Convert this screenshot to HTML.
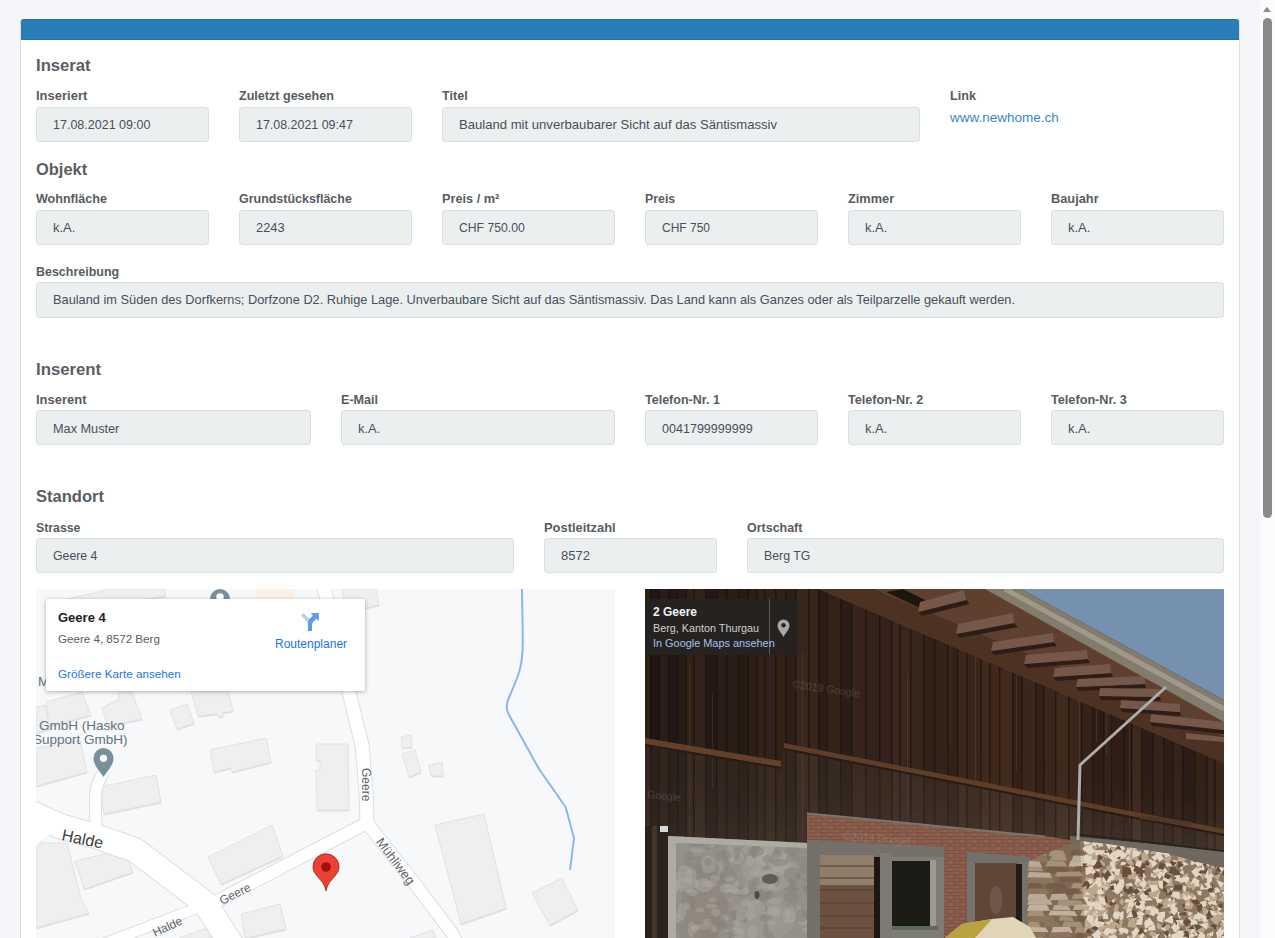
<!DOCTYPE html>
<html><head><meta charset="utf-8">
<style>
html,body{margin:0;padding:0;}
body{width:1275px;height:938px;overflow:hidden;background:#f4f6f9;position:relative;font-family:"Liberation Sans",sans-serif;}
.abs{position:absolute;}
#sb{position:absolute;left:1260px;top:0;width:15px;height:938px;background:#fbfbfb;}
#sbup{position:absolute;left:1263px;top:7px;width:0;height:0;border-left:4.5px solid transparent;border-right:4.5px solid transparent;border-bottom:5px solid #8a8a8a;}
#thumb{position:absolute;left:1263px;top:18px;width:9px;height:500px;background:#8a8a8a;border-radius:4.5px;}
#card{position:absolute;left:20px;top:18px;width:1220px;height:930px;box-sizing:border-box;background:#fff;border-left:1px solid #dedede;border-right:1px solid #dedede;border-radius:4px 4px 0 0;box-shadow:0 1px 2px rgba(0,0,0,.06);}
#cardhead{position:absolute;left:21px;top:19px;width:1218px;height:21px;background:#2a7db6;border-top:1px solid #1f72aa;border-bottom:1px solid #2373ad;box-sizing:border-box;border-radius:3px 3px 0 0;}
.h{position:absolute;font-weight:bold;color:#5a5e62;white-space:nowrap;line-height:20px;}
.lb{position:absolute;font-weight:bold;color:#585c61;white-space:nowrap;line-height:20px;}
.in{position:absolute;box-sizing:border-box;background:#ebeff0;border:1px solid #d6dfe1;border-radius:3.5px;}
.tx{position:absolute;color:#495057;white-space:nowrap;line-height:20px;}
.lnk{position:absolute;color:#3c85c0;white-space:nowrap;line-height:20px;}
svg text{font-family:"Liberation Sans",sans-serif;}
</style></head>
<body>
<div id="card"></div>
<div id="cardhead"></div>
<div class="h" style="left:36px;top:56px;font-size:16.66px">Inserat</div>
<div class="lb" style="left:36px;top:86px;font-size:13.0px">Inseriert</div>
<div class="lb" style="left:239px;top:86px;font-size:12.57px">Zuletzt gesehen</div>
<div class="lb" style="left:442px;top:86px;font-size:12.6px">Titel</div>
<div class="lb" style="left:950px;top:86px;font-size:12.6px">Link</div>
<div class="in" style="left:36px;top:107px;width:173px;height:35px"></div>
<div class="in" style="left:239px;top:107px;width:173px;height:35px"></div>
<div class="in" style="left:442px;top:107px;width:478px;height:35px"></div>
<div class="tx" style="left:53px;top:115px;font-size:12.52px">17.08.2021 09:00</div>
<div class="tx" style="left:256px;top:115px;font-size:12.44px">17.08.2021 09:47</div>
<div class="tx" style="left:459px;top:115px;font-size:13.1px">Bauland mit unverbaubarer Sicht auf das Säntismassiv</div>
<div class="lnk" style="left:950px;top:108px;font-size:13.5px">www.newhome.ch</div>
<div class="h" style="left:36px;top:159px;font-size:16.47px">Objekt</div>
<div class="lb" style="left:36px;top:189px;font-size:12.55px">Wohnfläche</div>
<div class="lb" style="left:239px;top:189px;font-size:12.46px">Grundstücksfläche</div>
<div class="lb" style="left:442px;top:189px;font-size:12.72px">Preis / m²</div>
<div class="lb" style="left:645px;top:189px;font-size:12.36px">Preis</div>
<div class="lb" style="left:848px;top:189px;font-size:12.77px">Zimmer</div>
<div class="lb" style="left:1051px;top:189px;font-size:12.8px">Baujahr</div>
<div class="in" style="left:36px;top:210px;width:173px;height:35px"></div>
<div class="in" style="left:239px;top:210px;width:173px;height:35px"></div>
<div class="in" style="left:442px;top:210px;width:173px;height:35px"></div>
<div class="in" style="left:645px;top:210px;width:173px;height:35px"></div>
<div class="in" style="left:848px;top:210px;width:173px;height:35px"></div>
<div class="in" style="left:1051px;top:210px;width:173px;height:35px"></div>
<div class="tx" style="left:53px;top:218px;font-size:13.0px">k.A.</div>
<div class="tx" style="left:256px;top:218px;font-size:12.86px">2243</div>
<div class="tx" style="left:459px;top:218px;font-size:12.19px">CHF 750.00</div>
<div class="tx" style="left:662px;top:218px;font-size:12.0px">CHF 750</div>
<div class="tx" style="left:865px;top:218px;font-size:13.0px">k.A.</div>
<div class="tx" style="left:1068px;top:218px;font-size:13.0px">k.A.</div>
<div class="lb" style="left:36px;top:262px;font-size:12.48px">Beschreibung</div>
<div class="in" style="left:36px;top:282px;width:1188px;height:36px"></div>
<div class="tx" style="left:53px;top:290px;font-size:12.81px">Bauland im Süden des Dorfkerns; Dorfzone D2. Ruhige Lage. Unverbaubare Sicht auf das Säntismassiv. Das Land kann als Ganzes oder als Teilparzelle gekauft werden.</div>
<div class="h" style="left:36px;top:360px;font-size:16.75px">Inserent</div>
<div class="lb" style="left:36px;top:390px;font-size:12.97px">Inserent</div>
<div class="lb" style="left:341px;top:390px;font-size:12.6px">E-Mail</div>
<div class="lb" style="left:645px;top:390px;font-size:12.52px">Telefon-Nr. 1</div>
<div class="lb" style="left:848px;top:390px;font-size:12.6px">Telefon-Nr. 2</div>
<div class="lb" style="left:1051px;top:390px;font-size:12.68px">Telefon-Nr. 3</div>
<div class="in" style="left:36px;top:410px;width:275px;height:35px"></div>
<div class="in" style="left:341px;top:410px;width:274px;height:35px"></div>
<div class="in" style="left:645px;top:410px;width:173px;height:35px"></div>
<div class="in" style="left:848px;top:410px;width:173px;height:35px"></div>
<div class="in" style="left:1051px;top:410px;width:173px;height:35px"></div>
<div class="tx" style="left:53px;top:419px;font-size:12.71px">Max Muster</div>
<div class="tx" style="left:358px;top:419px;font-size:13.0px">k.A.</div>
<div class="tx" style="left:662px;top:419px;font-size:12.55px">0041799999999</div>
<div class="tx" style="left:865px;top:419px;font-size:13.0px">k.A.</div>
<div class="tx" style="left:1068px;top:419px;font-size:13.0px">k.A.</div>
<div class="h" style="left:36px;top:487px;font-size:16.54px">Standort</div>
<div class="lb" style="left:36px;top:518px;font-size:12.3px">Strasse</div>
<div class="lb" style="left:544px;top:518px;font-size:12.9px">Postleitzahl</div>
<div class="lb" style="left:747px;top:518px;font-size:12.48px">Ortschaft</div>
<div class="in" style="left:36px;top:538px;width:478px;height:35px"></div>
<div class="in" style="left:544px;top:538px;width:173px;height:35px"></div>
<div class="in" style="left:747px;top:538px;width:477px;height:35px"></div>
<div class="tx" style="left:53px;top:546px;font-size:12.29px">Geere 4</div>
<div class="tx" style="left:561px;top:546px;font-size:13.0px">8572</div>
<div class="tx" style="left:764px;top:546px;font-size:12.3px">Berg TG</div>
<div id="map" class="abs" style="left:36px;top:589px;width:579px;height:349px;background:#f5f6f8;overflow:hidden">
<svg width="579" height="349" viewBox="36 589 579 349" style="position:absolute;left:0;top:0">
<rect x="36" y="589" width="579" height="349" fill="#f7f8fa"/>
<!-- buildings -->
<g fill="#dedfe2" stroke="none" transform="translate(0.5,1.5)">
<polygon points="64,600 110,589 165,589 165,596 115,604"/>
<polygon points="342,589 376,589 379,605 346,612"/>
<polygon points="46,702 82,692 91,715 49,726"/><polygon points="36,707 45,705 50,729 36,733"/><polygon points="102,708 119,699 118,692 132,692 142,719 108,726"/>
<polygon points="36,748 80,740 87,772 36,786"/>
<polygon points="100,787 156,775 161,802 104,814"/>
<polygon points="36,843 67,843 81,899 89,913 53,923 36,928"/>
<polygon points="75,861 125,849 133,872 84,889"/>
<polygon points="210,750 266,738 271,762 232,772 231,768 214,772"/>
<polygon points="208,857 272,825 283,856 221,884"/>
<polygon points="316,744 348,744 349,810 317,810 316,770 320,770 320,760 316,760"/>
<polygon points="241,914 280,904 286,929 245,938"/>
<polygon points="170,710 187,704 194,723 177,729"/>
<polygon points="191,691 228,691 233,711 222,713 223,716 218,717 217,714 198,716"/>
<polygon points="435,825 484,814 506,908 461,924"/>
<polygon points="532,893 562,878 578,910 550,925"/>
<polygon points="409,938 433,930 436,938"/>
<polygon points="402,754 415,750 421,772 409,777"/>
<polygon points="429,765 442,762 443,776 431,776"/>
<polygon points="401,737 411,735 412,747 402,748"/>
<polygon points="179,938 207,928 215,938"/>
</g>
<g fill="#efeff0" stroke="#e2e3e6" stroke-width="1">
<polygon points="64,600 110,589 165,589 165,596 115,604"/>
<polygon points="342,589 376,589 379,605 346,612"/>
<polygon points="46,702 82,692 91,715 49,726"/><polygon points="36,707 45,705 50,729 36,733"/><polygon points="102,708 119,699 118,692 132,692 142,719 108,726"/>
<polygon points="36,748 80,740 87,772 36,786"/>
<polygon points="100,787 156,775 161,802 104,814"/>
<polygon points="36,843 67,843 81,899 89,913 53,923 36,928"/>
<polygon points="75,861 125,849 133,872 84,889"/>
<polygon points="210,750 266,738 271,762 232,772 231,768 214,772"/>
<polygon points="208,857 272,825 283,856 221,884"/>
<polygon points="316,744 348,744 349,810 317,810 316,770 320,770 320,760 316,760"/>
<polygon points="241,914 280,904 286,929 245,938"/>
<polygon points="170,710 187,704 194,723 177,729"/>
<polygon points="191,691 228,691 233,711 222,713 223,716 218,717 217,714 198,716"/>
<polygon points="435,825 484,814 506,908 461,924"/>
<polygon points="532,893 562,878 578,910 550,925"/>
<polygon points="409,938 433,930 436,938"/>
<polygon points="402,754 415,750 421,772 409,777"/>
<polygon points="429,765 442,762 443,776 431,776"/>
<polygon points="401,737 411,735 412,747 402,748"/>
<polygon points="179,938 207,928 215,938"/>
</g>
<polygon points="256,589 295,589 295,599 256,599" fill="#fcf1e6"/>
<!-- stream -->
<path d="M522,589 L522.8,640 C523,655 521,668 517.5,677 L508,700 C506,706 506,710 509,715 L539,769 L565.6,807 L574,838 L570,870" fill="none" stroke="#8ab4f8" stroke-width="2" stroke-linejoin="round"/>
<!-- road borders -->
<g fill="none" stroke="#dcdee2" stroke-linejoin="round" stroke-linecap="butt">
<polyline points="320,570 349,692 362,745 366,790 367,823" stroke-width="15"/>
<polyline points="367,823 215,902" stroke-width="14"/>
<polyline points="367,823 412,880 452,933 460,950" stroke-width="14"/>
<polyline points="20,808 60,826 95,836 135,850 205,903 235,950" stroke-width="26"/>
<polyline points="100,945 200,907" stroke-width="12"/>
<path d="M96,830 C96,800 92,790 104,772" stroke-width="13"/>
</g>
<g fill="none" stroke="#ffffff" stroke-linejoin="round" stroke-linecap="butt">
<polyline points="320,570 349,692 362,745 366,790 367,823" stroke-width="13"/>
<polyline points="367,823 215,902" stroke-width="12"/>
<polyline points="367,823 412,880 452,933 460,950" stroke-width="12"/>
<polyline points="20,808 60,826 95,836 135,850 205,903 235,950" stroke-width="24"/>
<polyline points="100,945 200,907" stroke-width="10"/>
<path d="M96,830 C96,800 92,790 104,772" stroke-width="11"/>
</g>
<polygon points="30,815 52,832 44,839 30,852" fill="#fff"/>
<polyline points="30,853 44,839" stroke="#dcdee2" stroke-width="1" fill="none"/>
<!-- labels -->
<g fill="#5f7380" font-size="13.5">
<text x="39" y="730">GmbH (Hasko</text>
<text x="33" y="744">Support GmbH)</text>
<text x="38" y="686">M</text>
</g>
<g fill="#3c4043">
<text x="0" y="0" font-size="16" transform="translate(61,840) rotate(12)">Halde</text>
</g>
<g fill="#5f6368" font-size="12">
<text x="0" y="0" transform="translate(222,905) rotate(-27)">Geere</text>
<text x="0" y="0" transform="translate(155,937) rotate(-25)">Halde</text>
<text x="0" y="0" transform="translate(362,768) rotate(90)">Geere</text>
<text x="0" y="0" font-size="13" transform="translate(375.5,842) rotate(53)">Mühliweg</text>
</g>
<!-- grey pins -->
<g fill="#78909c">
<path d="M103.5,777 C100,771 93.5,766 93.5,758 A10,10 0 1 1 113.5,758 C113.5,766 107,771 103.5,777 Z"/>
<circle cx="220" cy="599" r="10"/>
</g>
<circle cx="103.5" cy="758.3" r="3.6" fill="#fff"/>
<circle cx="220" cy="597" r="3.8" fill="#fff"/>
<!-- red pin -->
<path d="M326,891 C325.2,886.5 323.5,883.5 320.5,880 C316.5,875.5 313,872 313,866.8 A13,13 0 1 1 339,866.8 C339,872 335.5,875.5 331.5,880 C328.5,883.5 326.8,886.5 326,891 Z" fill="#ea4335" stroke="#b31412" stroke-width="0.8"/>
<circle cx="326" cy="867" r="4.8" fill="#a50e0e"/>
<!-- info card -->
<rect x="46" y="599" width="319" height="92" rx="2" fill="#fff" style="filter:drop-shadow(0 1px 2px rgba(0,0,0,0.3))"/>
<text x="58" y="622" font-size="13" font-weight="bold" fill="#202124">Geere 4</text>
<text x="58" y="643" font-size="11.6" fill="#5b5b5b">Geere 4, 8572 Berg</text>
<text x="58" y="678" font-size="11.7" fill="#1a73e8">Größere Karte ansehen</text>
<text x="275" y="648" font-size="12" fill="#1a73e8">Routenplaner</text>
<g>
<path d="M301,615.6 L303.4,613 L309.8,619.2 L307.9,622.4 Z" fill="#b3d1f5"/>
<path d="M307.9,631 L307.9,623.5 C307.9,621.5 308.6,620 310,618.6 L312.8,615.6 L310.7,613 L318.9,613 L318.9,621 L316.3,618.8 L314,621.2 C312.8,622.4 312,623.4 312,625 L312,631 Z" fill="#5f9ee6"/>
</g>
</svg>

</div>
<div id="sv" class="abs" style="left:645px;top:589px;width:579px;height:349px;background:#3b2c22;overflow:hidden">
<svg width="579" height="349" viewBox="645 589 579 349" style="position:absolute;left:0;top:0">
<defs>
<pattern id="planks" x="645" y="0" width="19" height="400" patternUnits="userSpaceOnUse">
<rect width="19" height="400" fill="#38261d"/>
<rect x="0" width="2" height="400" fill="#2a1c16"/>
<rect x="4" width="5" height="400" fill="#412b21"/>
<rect x="11" width="1.5" height="400" fill="#2e1f18"/>
<rect x="14" width="3" height="400" fill="#3d2a21"/>
</pattern>
<linearGradient id="wallv" x1="0" y1="0" x2="0" y2="1">
<stop offset="0" stop-color="#000" stop-opacity="0"/>
<stop offset="0.45" stop-color="#000" stop-opacity="0"/>
<stop offset="0.75" stop-color="#8a7a70" stop-opacity="0.12"/>
<stop offset="1" stop-color="#8a7a70" stop-opacity="0.15"/>
</linearGradient>
<linearGradient id="wallshade" x1="0" y1="0" x2="1" y2="0">
<stop offset="0" stop-color="#000" stop-opacity="0.28"/>
<stop offset="0.35" stop-color="#000" stop-opacity="0.05"/>
<stop offset="0.6" stop-color="#5a2a10" stop-opacity="0.08"/>
<stop offset="1" stop-color="#000" stop-opacity="0.1"/>
</linearGradient>
<pattern id="planks2" x="645" y="0" width="13" height="400" patternUnits="userSpaceOnUse">
<rect width="13" height="400" fill="#3d2e25"/>
<rect x="0" width="1.5" height="400" fill="#241a14"/>
<rect x="4" width="5" height="400" fill="#4a3a30"/>
</pattern>
<pattern id="wood" x="0" y="0" width="22" height="13" patternUnits="userSpaceOnUse" patternTransform="rotate(-8)">
<rect width="22" height="13" fill="#9c8670"/>
<rect x="1" y="1" width="10" height="5" fill="#d0bea8"/>
<rect x="12" y="4" width="9" height="6" fill="#c6b29a"/>
<rect x="2" y="7.5" width="8" height="4.5" fill="#b8a48c"/>
<rect x="0" y="6" width="12" height="1.2" fill="#5a4638"/>
<rect x="11" y="0" width="1.2" height="13" fill="#6a5444"/>
</pattern>
<pattern id="brick" x="0" y="0" width="12" height="7" patternUnits="userSpaceOnUse">
<rect width="12" height="7" fill="#8a5a4a"/>
<rect x="1" y="0.5" width="4" height="2.5" fill="#94604e"/>
<rect x="7" y="4" width="4" height="2.3" fill="#925e4c"/>
<rect y="3" width="12" height="0.8" fill="#6f5248"/>
<rect y="6.3" width="12" height="0.7" fill="#6f5248"/>
<rect x="5.5" y="0" width="0.8" height="3.2" fill="#6f5248"/>
</pattern>
<filter id="soft" x="0" y="0" width="100%" height="100%"><feGaussianBlur stdDeviation="0.7"/></filter>
<clipPath id="wpclip"><polygon points="1027,938 1027,880 1029,861 1049,852 1080,841 1108,844 1170,854 1192,861 1224,868 1224,938"/></clipPath>
<clipPath id="ccclip"><polygon points="676,843 807,848 807,938 676,938"/></clipPath>
</defs>
<g filter="url(#soft)">
<rect x="640" y="585" width="10" height="360" fill="#402c21"/>
<rect x="640" y="585" width="1.5" height="360" fill="#22170f"/>
<rect x="650" y="585" width="8" height="360" fill="#2f2018"/>
<rect x="650" y="585" width="1.5" height="360" fill="#22170f"/>
<rect x="658" y="585" width="10" height="360" fill="#39271d"/>
<rect x="658" y="585" width="1.5" height="360" fill="#22170f"/>
<rect x="668" y="585" width="9" height="360" fill="#2e1f18"/>
<rect x="668" y="585" width="1.5" height="360" fill="#22170f"/>
<rect x="677" y="585" width="8" height="360" fill="#32221a"/>
<rect x="677" y="585" width="1.5" height="360" fill="#22170f"/>
<rect x="685" y="585" width="8" height="360" fill="#3e2a20"/>
<rect x="685" y="585" width="1.5" height="360" fill="#22170f"/>
<rect x="689" y="665" width="1" height="220" fill="#6a5848" opacity="0.35"/>
<rect x="693" y="585" width="12" height="360" fill="#402c21"/>
<rect x="693" y="585" width="1.5" height="360" fill="#22170f"/>
<rect x="705" y="585" width="11" height="360" fill="#2e1f18"/>
<rect x="705" y="585" width="1.5" height="360" fill="#22170f"/>
<rect x="712" y="694" width="1" height="94" fill="#6a5848" opacity="0.35"/>
<rect x="716" y="585" width="10" height="360" fill="#36241c"/>
<rect x="716" y="585" width="1.5" height="360" fill="#22170f"/>
<rect x="726" y="585" width="12" height="360" fill="#34231b"/>
<rect x="726" y="585" width="1.5" height="360" fill="#22170f"/>
<rect x="738" y="585" width="9" height="360" fill="#302019"/>
<rect x="738" y="585" width="1.5" height="360" fill="#22170f"/>
<rect x="747" y="585" width="9" height="360" fill="#35241b"/>
<rect x="747" y="585" width="1.5" height="360" fill="#22170f"/>
<rect x="756" y="585" width="8" height="360" fill="#39261d"/>
<rect x="756" y="585" width="1.5" height="360" fill="#22170f"/>
<rect x="764" y="585" width="11" height="360" fill="#3b281e"/>
<rect x="764" y="585" width="1.5" height="360" fill="#22170f"/>
<rect x="775" y="585" width="10" height="360" fill="#37251c"/>
<rect x="775" y="585" width="1.5" height="360" fill="#22170f"/>
<rect x="785" y="585" width="10" height="360" fill="#33231a"/>
<rect x="785" y="585" width="1.5" height="360" fill="#22170f"/>
<rect x="795" y="585" width="13" height="360" fill="#3d291f"/>
<rect x="795" y="585" width="1.5" height="360" fill="#22170f"/>
<rect x="802" y="652" width="1" height="186" fill="#6a5848" opacity="0.35"/>
<rect x="808" y="585" width="10" height="360" fill="#3c291f"/>
<rect x="808" y="585" width="1.5" height="360" fill="#22170f"/>
<rect x="818" y="585" width="8" height="360" fill="#302019"/>
<rect x="818" y="585" width="1.5" height="360" fill="#22170f"/>
<rect x="826" y="585" width="14" height="360" fill="#34231b"/>
<rect x="826" y="585" width="1.5" height="360" fill="#22170f"/>
<rect x="840" y="585" width="11" height="360" fill="#2e1f18"/>
<rect x="840" y="585" width="1.5" height="360" fill="#22170f"/>
<rect x="851" y="585" width="14" height="360" fill="#39261d"/>
<rect x="851" y="585" width="1.5" height="360" fill="#22170f"/>
<rect x="865" y="585" width="14" height="360" fill="#34231b"/>
<rect x="865" y="585" width="1.5" height="360" fill="#22170f"/>
<rect x="879" y="585" width="12" height="360" fill="#37251c"/>
<rect x="879" y="585" width="1.5" height="360" fill="#22170f"/>
<rect x="891" y="585" width="8" height="360" fill="#3e2a20"/>
<rect x="891" y="585" width="1.5" height="360" fill="#22170f"/>
<rect x="899" y="585" width="11" height="360" fill="#3b281e"/>
<rect x="899" y="585" width="1.5" height="360" fill="#22170f"/>
<rect x="907" y="674" width="1" height="139" fill="#6a5848" opacity="0.35"/>
<rect x="910" y="585" width="13" height="360" fill="#39271d"/>
<rect x="910" y="585" width="1.5" height="360" fill="#22170f"/>
<rect x="923" y="585" width="11" height="360" fill="#33221a"/>
<rect x="923" y="585" width="1.5" height="360" fill="#22170f"/>
<rect x="934" y="585" width="13" height="360" fill="#34231b"/>
<rect x="934" y="585" width="1.5" height="360" fill="#22170f"/>
<rect x="947" y="585" width="10" height="360" fill="#312119"/>
<rect x="947" y="585" width="1.5" height="360" fill="#22170f"/>
<rect x="950" y="612" width="1" height="133" fill="#6a5848" opacity="0.35"/>
<rect x="957" y="585" width="9" height="360" fill="#3c291f"/>
<rect x="957" y="585" width="1.5" height="360" fill="#22170f"/>
<rect x="966" y="585" width="14" height="360" fill="#37251c"/>
<rect x="966" y="585" width="1.5" height="360" fill="#22170f"/>
<rect x="975" y="655" width="1" height="131" fill="#6a5848" opacity="0.35"/>
<rect x="980" y="585" width="9" height="360" fill="#3e2a20"/>
<rect x="980" y="585" width="1.5" height="360" fill="#22170f"/>
<rect x="989" y="585" width="10" height="360" fill="#3c281f"/>
<rect x="989" y="585" width="1.5" height="360" fill="#22170f"/>
<rect x="999" y="585" width="13" height="360" fill="#3f2b20"/>
<rect x="999" y="585" width="1.5" height="360" fill="#22170f"/>
<rect x="1012" y="585" width="9" height="360" fill="#2f2018"/>
<rect x="1012" y="585" width="1.5" height="360" fill="#22170f"/>
<rect x="1016" y="586" width="1" height="184" fill="#6a5848" opacity="0.35"/>
<rect x="1021" y="585" width="14" height="360" fill="#39271d"/>
<rect x="1021" y="585" width="1.5" height="360" fill="#22170f"/>
<rect x="1035" y="585" width="8" height="360" fill="#302119"/>
<rect x="1035" y="585" width="1.5" height="360" fill="#22170f"/>
<rect x="1043" y="585" width="12" height="360" fill="#39261d"/>
<rect x="1043" y="585" width="1.5" height="360" fill="#22170f"/>
<rect x="1055" y="585" width="13" height="360" fill="#3f2b20"/>
<rect x="1055" y="585" width="1.5" height="360" fill="#22170f"/>
<rect x="1068" y="585" width="13" height="360" fill="#3b281e"/>
<rect x="1068" y="585" width="1.5" height="360" fill="#22170f"/>
<rect x="1079" y="635" width="1" height="161" fill="#6a5848" opacity="0.35"/>
<rect x="1081" y="585" width="11" height="360" fill="#35241b"/>
<rect x="1081" y="585" width="1.5" height="360" fill="#22170f"/>
<rect x="1092" y="585" width="11" height="360" fill="#2f1f18"/>
<rect x="1092" y="585" width="1.5" height="360" fill="#22170f"/>
<rect x="1096" y="641" width="1" height="101" fill="#6a5848" opacity="0.35"/>
<rect x="1103" y="585" width="8" height="360" fill="#34231b"/>
<rect x="1103" y="585" width="1.5" height="360" fill="#22170f"/>
<rect x="1106" y="657" width="1" height="98" fill="#6a5848" opacity="0.35"/>
<rect x="1111" y="585" width="12" height="360" fill="#302019"/>
<rect x="1111" y="585" width="1.5" height="360" fill="#22170f"/>
<rect x="1123" y="585" width="8" height="360" fill="#2f1f18"/>
<rect x="1123" y="585" width="1.5" height="360" fill="#22170f"/>
<rect x="1129" y="604" width="1" height="222" fill="#6a5848" opacity="0.35"/>
<rect x="1131" y="585" width="10" height="360" fill="#412c21"/>
<rect x="1131" y="585" width="1.5" height="360" fill="#22170f"/>
<rect x="1141" y="585" width="11" height="360" fill="#302019"/>
<rect x="1141" y="585" width="1.5" height="360" fill="#22170f"/>
<rect x="1152" y="585" width="11" height="360" fill="#37251c"/>
<rect x="1152" y="585" width="1.5" height="360" fill="#22170f"/>
<rect x="1163" y="585" width="9" height="360" fill="#302019"/>
<rect x="1163" y="585" width="1.5" height="360" fill="#22170f"/>
<rect x="1172" y="585" width="10" height="360" fill="#37251c"/>
<rect x="1172" y="585" width="1.5" height="360" fill="#22170f"/>
<rect x="1182" y="585" width="12" height="360" fill="#2e1f18"/>
<rect x="1182" y="585" width="1.5" height="360" fill="#22170f"/>
<rect x="1194" y="585" width="12" height="360" fill="#35241b"/>
<rect x="1194" y="585" width="1.5" height="360" fill="#22170f"/>
<rect x="1206" y="585" width="8" height="360" fill="#3d291f"/>
<rect x="1206" y="585" width="1.5" height="360" fill="#22170f"/>
<rect x="1214" y="585" width="13" height="360" fill="#3f2b20"/>
<rect x="1214" y="585" width="1.5" height="360" fill="#22170f"/>
<rect x="1227" y="585" width="10" height="360" fill="#38261d"/>
<rect x="1227" y="585" width="1.5" height="360" fill="#22170f"/>
<rect x="640" y="585" width="590" height="360" fill="url(#wallshade)"/>
<rect x="640" y="585" width="590" height="360" fill="url(#wallv)"/>
<!-- eaves region -->
<polygon points="818,589 873,589 1224,736.4 1224,763.6" fill="#4d3123"/>
<polygon points="873,589 990,589 1224,718 1224,736.4" fill="#5e402f"/>
<polygon points="886,592 903,589 925,600 920,608" fill="#1e1510"/>
<g fill="#2e1f17">
<polygon points="918,612 966,600 970,604 922,616"/>
<polygon points="956,634 1014,623 1018,627 960,638"/>
<polygon points="991,651 1054,642 1057,646 994,655"/>
<polygon points="1024,664 1088,659 1090,663 1027,668"/>
<polygon points="1053,677 1111,673 1113,677 1056,681"/>
<polygon points="1076,687 1145,684 1146,688 1078,691"/>
<polygon points="1099,696 1160,697 1161,701 1101,700"/>
<polygon points="1120,708 1180,712 1181,716 1122,712"/>
<polygon points="1150,722 1224,730 1224,734 1152,726"/>
</g>
<g fill="#74594a">
<polygon points="920,602 964,590 966,600 918,612"/>
<polygon points="958,624 1013,613 1014,623 956,634"/>
<polygon points="993,642 1053,633 1054,642 991,651"/>
<polygon points="1026,655 1087,650 1088,659 1024,664"/>
<polygon points="1055,668 1110,664 1111,673 1053,677"/>
<polygon points="1078,679 1145,676 1145,684 1076,687"/>
<polygon points="1100,688 1159,689 1160,697 1099,696"/>
<polygon points="1121,700 1180,704 1180,712 1120,708"/>
<polygon points="1151,714 1224,722 1224,730 1150,722"/>
<polygon points="1186,733 1224,737 1224,742 1186,739"/>
</g>
<!-- gutter -->
<polygon points="985,589 1021,589 1224,700 1224,722" fill="#837c6c"/>
<polyline points="1005,589 1224,709" stroke="#a09888" stroke-width="5" fill="none"/>
<!-- sky -->
<polygon points="1021,589 1224,589 1224,700" fill="#7690af"/>
<!-- beams -->
<polygon points="645,738 781,761 781,767 645,744" fill="#643f2b"/><polygon points="645,744 781,767 781,769 645,746" fill="#2a1c14"/>
<polygon points="784,743 1120,809 1224,829 1224,834 1120,814 784,748" fill="#5e3c28"/><polygon points="784,748 1120,814 1224,834 1224,836 1120,816 784,750" fill="#2a1c14"/><polygon points="645,746 781,769 784,750 1120,816 1224,836 1224,870 645,840" fill="#7a7a6a" opacity="0.1"/>
<polygon points="1140,815 1192,822 1192,826 1140,819" fill="#50372a"/>
<!-- rail & lower right base -->
<polygon points="1070,836 1224,850 1224,870 1070,862" fill="#6e675e"/>
<polyline points="1075,834 1224,851" stroke="#2a2420" stroke-width="2" fill="none"/>
<!-- left lower dark strip -->
<rect x="640" y="826" width="29" height="115" fill="#2c201a"/>
<rect x="652" y="826" width="5" height="115" fill="#43352d"/>
<rect x="660" y="826" width="8" height="6" fill="#d8d8d6"/>
<!-- concrete -->
<polygon points="668,836 807,843 807,938 668,938" fill="#94918b"/>
<polygon points="668,836 807,843 807,848 676,843 676,938 668,938" fill="#aeaba4"/>
<ellipse cx="705" cy="900" rx="24" ry="42" fill="#877e72" opacity="0.45"/>
<ellipse cx="770" cy="870" rx="28" ry="22" fill="#a8a6a1" opacity="0.4"/>
<ellipse cx="760" cy="920" rx="35" ry="20" fill="#a2a09b" opacity="0.4"/>
<g clip-path="url(#ccclip)">
<ellipse cx="799.2" cy="911.6" rx="3.1" ry="6.2" fill="#aaa7a1" opacity="0.5"/>
<ellipse cx="774.2" cy="855.8" rx="8.2" ry="7.1" fill="#85827c" opacity="0.5"/>
<ellipse cx="765.7" cy="930.1" rx="2.6" ry="7.2" fill="#85827c" opacity="0.5"/>
<ellipse cx="764.6" cy="867.2" rx="4.3" ry="3.8" fill="#8c8274" opacity="0.5"/>
<ellipse cx="688.6" cy="859.1" rx="5.0" ry="8.0" fill="#8c8274" opacity="0.5"/>
<ellipse cx="695.0" cy="841.4" rx="7.6" ry="7.9" fill="#85827c" opacity="0.5"/>
<ellipse cx="761.1" cy="910.5" rx="6.8" ry="8.1" fill="#85827c" opacity="0.5"/>
<ellipse cx="803.6" cy="921.3" rx="5.9" ry="4.5" fill="#aaa7a1" opacity="0.5"/>
<ellipse cx="691.1" cy="876.2" rx="5.4" ry="8.3" fill="#aaa7a1" opacity="0.5"/>
<ellipse cx="750.3" cy="860.9" rx="4.5" ry="5.4" fill="#aaa7a1" opacity="0.5"/>
<ellipse cx="779.8" cy="941.5" rx="5.8" ry="4.2" fill="#aaa7a1" opacity="0.5"/>
<ellipse cx="754.7" cy="851.4" rx="2.1" ry="6.7" fill="#85827c" opacity="0.5"/>
<ellipse cx="806.7" cy="886.7" rx="2.7" ry="7.8" fill="#85827c" opacity="0.5"/>
<ellipse cx="805.0" cy="875.4" rx="4.1" ry="3.0" fill="#aaa7a1" opacity="0.5"/>
<ellipse cx="681.4" cy="925.9" rx="3.6" ry="3.5" fill="#8c8274" opacity="0.5"/>
<ellipse cx="691.4" cy="900.4" rx="3.5" ry="8.3" fill="#85827c" opacity="0.5"/>
<ellipse cx="736.4" cy="858.1" rx="6.1" ry="3.3" fill="#85827c" opacity="0.5"/>
<ellipse cx="732.1" cy="914.8" rx="7.3" ry="3.8" fill="#85827c" opacity="0.5"/>
<ellipse cx="696.0" cy="858.6" rx="8.4" ry="2.3" fill="#8c8274" opacity="0.5"/>
<ellipse cx="736.6" cy="843.8" rx="2.8" ry="6.9" fill="#aaa7a1" opacity="0.5"/>
<ellipse cx="707.7" cy="864.6" rx="7.7" ry="8.7" fill="#aaa7a1" opacity="0.5"/>
<ellipse cx="785.4" cy="861.2" rx="7.2" ry="7.6" fill="#aaa7a1" opacity="0.5"/>
<ellipse cx="680.5" cy="944.4" rx="6.6" ry="4.4" fill="#85827c" opacity="0.5"/>
<ellipse cx="750.2" cy="916.3" rx="3.7" ry="4.1" fill="#aaa7a1" opacity="0.5"/>
<ellipse cx="765.4" cy="916.4" rx="6.6" ry="5.6" fill="#85827c" opacity="0.5"/>
<ellipse cx="787.2" cy="917.2" rx="5.3" ry="2.5" fill="#85827c" opacity="0.5"/>
<ellipse cx="729.7" cy="895.1" rx="4.8" ry="5.4" fill="#aaa7a1" opacity="0.5"/>
<ellipse cx="766.7" cy="876.0" rx="3.2" ry="6.7" fill="#aaa7a1" opacity="0.5"/>
<ellipse cx="732.9" cy="930.1" rx="8.6" ry="2.2" fill="#aaa7a1" opacity="0.5"/>
<ellipse cx="714.0" cy="944.8" rx="8.1" ry="5.5" fill="#85827c" opacity="0.5"/>
<ellipse cx="713.5" cy="899.6" rx="5.1" ry="2.3" fill="#aaa7a1" opacity="0.5"/>
<ellipse cx="684.8" cy="933.2" rx="5.6" ry="7.2" fill="#8c8274" opacity="0.5"/>
<ellipse cx="732.5" cy="886.3" rx="7.8" ry="7.3" fill="#aaa7a1" opacity="0.5"/>
<ellipse cx="730.1" cy="938.7" rx="2.1" ry="2.0" fill="#85827c" opacity="0.5"/>
<ellipse cx="797.9" cy="876.2" rx="2.7" ry="2.7" fill="#8c8274" opacity="0.5"/>
<ellipse cx="746.9" cy="847.1" rx="4.6" ry="7.1" fill="#aaa7a1" opacity="0.5"/>
<ellipse cx="707.9" cy="862.0" rx="3.5" ry="4.0" fill="#85827c" opacity="0.5"/>
<ellipse cx="773.9" cy="850.8" rx="7.8" ry="2.9" fill="#85827c" opacity="0.5"/>
<ellipse cx="699.9" cy="910.2" rx="4.3" ry="2.3" fill="#aaa7a1" opacity="0.5"/>
<ellipse cx="766.3" cy="883.0" rx="4.6" ry="3.6" fill="#85827c" opacity="0.5"/>
<ellipse cx="793.5" cy="886.5" rx="3.2" ry="5.5" fill="#85827c" opacity="0.5"/>
<ellipse cx="773.7" cy="910.8" rx="6.6" ry="5.0" fill="#aaa7a1" opacity="0.5"/>
<ellipse cx="811.2" cy="920.8" rx="5.6" ry="3.2" fill="#aaa7a1" opacity="0.5"/>
<ellipse cx="698.6" cy="849.2" rx="7.7" ry="3.6" fill="#aaa7a1" opacity="0.5"/>
<ellipse cx="726.1" cy="854.0" rx="2.6" ry="6.5" fill="#85827c" opacity="0.5"/>
<ellipse cx="676.4" cy="885.6" rx="3.6" ry="7.0" fill="#aaa7a1" opacity="0.5"/>
<ellipse cx="741.7" cy="935.5" rx="2.9" ry="7.4" fill="#aaa7a1" opacity="0.5"/>
<ellipse cx="716.6" cy="841.6" rx="4.8" ry="6.7" fill="#85827c" opacity="0.5"/>
<ellipse cx="712.4" cy="878.7" rx="3.4" ry="4.4" fill="#85827c" opacity="0.5"/>
<ellipse cx="730.2" cy="854.0" rx="5.3" ry="8.8" fill="#aaa7a1" opacity="0.5"/>
<ellipse cx="757.7" cy="871.1" rx="6.7" ry="4.8" fill="#aaa7a1" opacity="0.5"/>
<ellipse cx="688.1" cy="886.7" rx="5.3" ry="6.4" fill="#aaa7a1" opacity="0.5"/>
<ellipse cx="801.7" cy="915.2" rx="5.4" ry="7.3" fill="#85827c" opacity="0.5"/>
<ellipse cx="769.8" cy="846.2" rx="5.6" ry="7.2" fill="#aaa7a1" opacity="0.5"/>
<ellipse cx="703.8" cy="885.3" rx="9.0" ry="7.2" fill="#aaa7a1" opacity="0.5"/>
<ellipse cx="703.0" cy="927.4" rx="6.7" ry="4.0" fill="#8c8274" opacity="0.5"/>
<ellipse cx="736.7" cy="857.6" rx="7.3" ry="6.7" fill="#aaa7a1" opacity="0.5"/>
<ellipse cx="735.8" cy="938.4" rx="5.6" ry="2.7" fill="#aaa7a1" opacity="0.5"/>
<ellipse cx="680.7" cy="874.3" rx="7.4" ry="6.2" fill="#8c8274" opacity="0.5"/>
<ellipse cx="681.9" cy="889.1" rx="2.2" ry="3.2" fill="#aaa7a1" opacity="0.5"/>
<ellipse cx="735.7" cy="927.7" rx="5.2" ry="7.7" fill="#aaa7a1" opacity="0.5"/>
<ellipse cx="691.2" cy="929.2" rx="3.3" ry="8.2" fill="#aaa7a1" opacity="0.5"/>
<ellipse cx="711.1" cy="906.2" rx="5.5" ry="2.2" fill="#aaa7a1" opacity="0.5"/>
<ellipse cx="808.1" cy="930.3" rx="5.8" ry="3.2" fill="#aaa7a1" opacity="0.5"/>
<ellipse cx="702.4" cy="926.7" rx="7.6" ry="2.8" fill="#aaa7a1" opacity="0.5"/>
<ellipse cx="786.4" cy="916.8" rx="4.5" ry="7.0" fill="#aaa7a1" opacity="0.5"/>
<ellipse cx="707.7" cy="922.1" rx="5.1" ry="3.3" fill="#aaa7a1" opacity="0.5"/>
<ellipse cx="769.4" cy="913.0" rx="7.3" ry="2.5" fill="#aaa7a1" opacity="0.5"/>
<ellipse cx="687.3" cy="906.3" rx="3.0" ry="3.9" fill="#aaa7a1" opacity="0.5"/>
<ellipse cx="678.5" cy="880.5" rx="8.6" ry="8.5" fill="#aaa7a1" opacity="0.5"/>
<ellipse cx="750.2" cy="887.6" rx="7.3" ry="7.3" fill="#85827c" opacity="0.5"/>
<ellipse cx="685.6" cy="876.2" rx="8.8" ry="2.3" fill="#85827c" opacity="0.5"/>
<ellipse cx="809.0" cy="915.4" rx="4.1" ry="5.8" fill="#85827c" opacity="0.5"/>
<ellipse cx="761.9" cy="858.2" rx="7.6" ry="8.6" fill="#aaa7a1" opacity="0.5"/>
<ellipse cx="731.6" cy="934.1" rx="3.5" ry="4.9" fill="#85827c" opacity="0.5"/>
<ellipse cx="713.8" cy="937.5" rx="5.6" ry="4.5" fill="#8c8274" opacity="0.5"/>
<ellipse cx="715.8" cy="912.3" rx="4.6" ry="4.1" fill="#aaa7a1" opacity="0.5"/>
<ellipse cx="764.8" cy="895.0" rx="8.6" ry="7.7" fill="#85827c" opacity="0.5"/>
<ellipse cx="704.9" cy="934.6" rx="5.8" ry="3.7" fill="#8c8274" opacity="0.5"/>
<ellipse cx="728.5" cy="876.5" rx="8.5" ry="9.0" fill="#85827c" opacity="0.5"/>
<ellipse cx="806.0" cy="943.6" rx="6.2" ry="3.9" fill="#aaa7a1" opacity="0.5"/>
<ellipse cx="741.7" cy="894.3" rx="7.3" ry="2.9" fill="#8c8274" opacity="0.5"/>
<ellipse cx="809.3" cy="851.2" rx="5.7" ry="2.2" fill="#85827c" opacity="0.5"/>
<ellipse cx="689.0" cy="877.5" rx="4.3" ry="7.0" fill="#aaa7a1" opacity="0.5"/>
<ellipse cx="775.0" cy="900.6" rx="8.1" ry="3.3" fill="#aaa7a1" opacity="0.5"/>
<ellipse cx="733.5" cy="914.3" rx="5.2" ry="5.2" fill="#8c8274" opacity="0.5"/>
<ellipse cx="698.3" cy="842.2" rx="5.9" ry="6.0" fill="#85827c" opacity="0.5"/>
<ellipse cx="773.9" cy="887.0" rx="5.0" ry="4.2" fill="#aaa7a1" opacity="0.5"/>
<ellipse cx="729.7" cy="895.6" rx="4.6" ry="3.5" fill="#85827c" opacity="0.5"/>
<ellipse cx="743.4" cy="842.5" rx="4.5" ry="4.5" fill="#85827c" opacity="0.5"/>
<ellipse cx="804.5" cy="864.3" rx="5.2" ry="8.7" fill="#8c8274" opacity="0.5"/>
<ellipse cx="763.2" cy="894.9" rx="7.1" ry="6.7" fill="#8c8274" opacity="0.5"/>
<ellipse cx="778.2" cy="864.6" rx="6.6" ry="8.1" fill="#aaa7a1" opacity="0.5"/>
<ellipse cx="745.2" cy="919.5" rx="2.2" ry="3.7" fill="#85827c" opacity="0.5"/>
<ellipse cx="714.1" cy="926.4" rx="3.3" ry="5.5" fill="#aaa7a1" opacity="0.5"/>
<ellipse cx="695.0" cy="928.2" rx="4.4" ry="2.6" fill="#aaa7a1" opacity="0.5"/>
<ellipse cx="776.8" cy="912.3" rx="3.3" ry="5.0" fill="#aaa7a1" opacity="0.5"/>
<ellipse cx="712.7" cy="920.8" rx="3.7" ry="2.1" fill="#85827c" opacity="0.5"/>
<ellipse cx="692.5" cy="892.7" rx="5.4" ry="3.6" fill="#aaa7a1" opacity="0.5"/>
<ellipse cx="792.5" cy="850.9" rx="8.1" ry="5.9" fill="#85827c" opacity="0.5"/>
<ellipse cx="771.5" cy="922.8" rx="4.3" ry="2.7" fill="#aaa7a1" opacity="0.5"/>
<ellipse cx="744.2" cy="891.6" rx="5.7" ry="3.3" fill="#aaa7a1" opacity="0.5"/>
<ellipse cx="710.8" cy="843.0" rx="6.9" ry="5.0" fill="#aaa7a1" opacity="0.5"/>
<ellipse cx="810.1" cy="882.4" rx="4.8" ry="5.4" fill="#aaa7a1" opacity="0.5"/>
<ellipse cx="684.5" cy="874.0" rx="7.4" ry="8.7" fill="#aaa7a1" opacity="0.5"/>
<ellipse cx="726.7" cy="863.2" rx="2.5" ry="7.6" fill="#85827c" opacity="0.5"/>
<ellipse cx="709.0" cy="883.8" rx="8.5" ry="3.3" fill="#aaa7a1" opacity="0.5"/>
<ellipse cx="726.8" cy="918.2" rx="5.7" ry="3.6" fill="#aaa7a1" opacity="0.5"/>
<ellipse cx="746.2" cy="887.3" rx="2.4" ry="6.5" fill="#aaa7a1" opacity="0.5"/>
<ellipse cx="763.4" cy="857.9" rx="5.8" ry="8.5" fill="#aaa7a1" opacity="0.5"/>
<ellipse cx="754.7" cy="873.6" rx="5.2" ry="2.2" fill="#aaa7a1" opacity="0.5"/>
<ellipse cx="790.9" cy="883.3" rx="2.8" ry="4.9" fill="#85827c" opacity="0.5"/>
<ellipse cx="674.4" cy="927.7" rx="4.4" ry="3.7" fill="#8c8274" opacity="0.5"/>
<ellipse cx="736.4" cy="853.2" rx="3.3" ry="7.0" fill="#85827c" opacity="0.5"/>
<ellipse cx="732.0" cy="917.9" rx="4.3" ry="3.2" fill="#85827c" opacity="0.5"/>
<ellipse cx="700.7" cy="869.1" rx="2.4" ry="6.4" fill="#85827c" opacity="0.5"/>
<ellipse cx="792.9" cy="858.8" rx="7.3" ry="3.9" fill="#85827c" opacity="0.5"/>
<ellipse cx="743.1" cy="916.5" rx="2.7" ry="4.9" fill="#85827c" opacity="0.5"/>
<ellipse cx="705.8" cy="845.8" rx="5.3" ry="4.3" fill="#85827c" opacity="0.5"/>
<ellipse cx="739.5" cy="913.8" rx="6.8" ry="2.6" fill="#85827c" opacity="0.5"/>
<ellipse cx="726.2" cy="888.4" rx="6.5" ry="4.9" fill="#aaa7a1" opacity="0.5"/>
<ellipse cx="756.6" cy="908.8" rx="8.7" ry="8.7" fill="#aaa7a1" opacity="0.5"/>
<ellipse cx="766.7" cy="849.9" rx="7.0" ry="8.9" fill="#aaa7a1" opacity="0.5"/>
<ellipse cx="790.6" cy="915.3" rx="5.5" ry="8.4" fill="#aaa7a1" opacity="0.5"/>
<ellipse cx="715.8" cy="923.6" rx="4.9" ry="2.8" fill="#85827c" opacity="0.5"/>
<ellipse cx="755.7" cy="881.4" rx="3.8" ry="4.1" fill="#85827c" opacity="0.5"/>
<ellipse cx="755.6" cy="851.5" rx="8.5" ry="4.9" fill="#85827c" opacity="0.5"/>
<ellipse cx="808.2" cy="876.7" rx="6.8" ry="6.0" fill="#85827c" opacity="0.5"/>
<ellipse cx="728.8" cy="925.0" rx="5.5" ry="5.0" fill="#85827c" opacity="0.5"/>
<ellipse cx="767.0" cy="859.2" rx="4.3" ry="4.2" fill="#85827c" opacity="0.5"/>
<ellipse cx="811.5" cy="932.8" rx="4.9" ry="4.9" fill="#aaa7a1" opacity="0.5"/>
<ellipse cx="777.0" cy="879.8" rx="3.3" ry="7.5" fill="#85827c" opacity="0.5"/>
<ellipse cx="719.0" cy="922.6" rx="6.5" ry="6.1" fill="#8c8274" opacity="0.5"/>
<ellipse cx="720.8" cy="900.8" rx="6.1" ry="4.5" fill="#8c8274" opacity="0.5"/>
<ellipse cx="739.7" cy="889.4" rx="2.2" ry="5.1" fill="#8c8274" opacity="0.5"/>
<ellipse cx="672.2" cy="907.0" rx="2.6" ry="5.7" fill="#85827c" opacity="0.5"/>
<ellipse cx="677.6" cy="917.8" rx="2.8" ry="4.4" fill="#aaa7a1" opacity="0.5"/>
<ellipse cx="741.7" cy="914.7" rx="6.4" ry="5.3" fill="#aaa7a1" opacity="0.5"/>
<ellipse cx="791.2" cy="889.2" rx="8.3" ry="2.0" fill="#8c8274" opacity="0.5"/>
<ellipse cx="766.1" cy="887.0" rx="5.7" ry="4.6" fill="#aaa7a1" opacity="0.5"/>
<ellipse cx="754.3" cy="852.2" rx="2.9" ry="6.3" fill="#8c8274" opacity="0.5"/>
<ellipse cx="810.6" cy="888.3" rx="7.5" ry="4.4" fill="#8c8274" opacity="0.5"/>
<ellipse cx="718.4" cy="868.4" rx="4.6" ry="6.2" fill="#aaa7a1" opacity="0.5"/>
<ellipse cx="694.9" cy="928.4" rx="2.5" ry="5.0" fill="#aaa7a1" opacity="0.5"/>
<ellipse cx="746.5" cy="902.9" rx="5.1" ry="4.0" fill="#aaa7a1" opacity="0.5"/>
<ellipse cx="752.6" cy="932.3" rx="5.6" ry="6.7" fill="#aaa7a1" opacity="0.5"/>
<ellipse cx="777.3" cy="871.2" rx="7.0" ry="4.4" fill="#aaa7a1" opacity="0.5"/>
<ellipse cx="770.0" cy="940.2" rx="4.8" ry="8.5" fill="#8c8274" opacity="0.5"/>
<ellipse cx="791.3" cy="897.0" rx="7.6" ry="6.3" fill="#8c8274" opacity="0.5"/>
<ellipse cx="696.0" cy="884.0" rx="3.3" ry="4.3" fill="#aaa7a1" opacity="0.5"/>
<ellipse cx="737.1" cy="891.6" rx="5.2" ry="3.1" fill="#aaa7a1" opacity="0.5"/>
<ellipse cx="810.6" cy="889.4" rx="2.6" ry="3.6" fill="#85827c" opacity="0.5"/>
<ellipse cx="681.9" cy="911.7" rx="4.2" ry="8.5" fill="#aaa7a1" opacity="0.5"/>
<ellipse cx="792.8" cy="874.9" rx="8.8" ry="7.6" fill="#85827c" opacity="0.5"/>
<ellipse cx="779.8" cy="862.3" rx="8.5" ry="3.9" fill="#85827c" opacity="0.5"/>
<ellipse cx="723.6" cy="855.3" rx="8.6" ry="4.9" fill="#8c8274" opacity="0.5"/>
<ellipse cx="715.2" cy="877.8" rx="5.0" ry="3.3" fill="#aaa7a1" opacity="0.5"/>
<ellipse cx="730.0" cy="878.9" rx="5.6" ry="2.5" fill="#aaa7a1" opacity="0.5"/>
<ellipse cx="716.7" cy="869.2" rx="2.4" ry="5.7" fill="#85827c" opacity="0.5"/>
<ellipse cx="740.9" cy="943.0" rx="5.9" ry="2.1" fill="#85827c" opacity="0.5"/>
</g>
<ellipse cx="770" cy="879" rx="8" ry="5" fill="#5f5c55"/>
<ellipse cx="757" cy="895" rx="2.5" ry="4" fill="#4e4a44"/>
<!-- brick -->
<polygon points="807,813 845,816.5 1045,836 1070,840 1070,938 807,938" fill="url(#brick)"/>
<polyline points="807,813.5 845,817 1045,836.5" stroke="#7a746c" stroke-width="2" fill="none"/>
<!-- lintels/frames -->
<polygon points="807,840 944,847 944,858 807,855" fill="#74716b"/>
<rect x="807" y="840" width="13" height="98" fill="#74716b"/>
<polygon points="967,852 1030,857 1030,870 967,866" fill="#72706a"/>
<!-- door 1 -->
<rect x="820" y="855" width="54" height="83" fill="#6c5140"/>
<rect x="820" y="855" width="54" height="30" fill="#8f7e6c"/>
<g stroke="#4f3c2e" stroke-width="1">
<line x1="820" y1="866" x2="874" y2="866"/><line x1="820" y1="878" x2="874" y2="878"/><line x1="820" y1="890" x2="874" y2="890"/><line x1="820" y1="903" x2="874" y2="903"/><line x1="820" y1="916" x2="874" y2="916"/><line x1="820" y1="928" x2="874" y2="928"/>
</g>
<rect x="874" y="857" width="6" height="81" fill="#1d1814"/>
<rect x="880" y="853" width="12" height="85" fill="#7d7a72"/>
<!-- window -->
<rect x="892" y="857" width="52" height="81" fill="#7e7b74"/>
<rect x="892" y="861" width="38" height="65" fill="#1f1b18"/>
<rect x="930" y="860" width="6" height="68" fill="#9c9a92"/>
<rect x="892" y="926" width="46" height="4" fill="#5a6a5a"/>
<!-- door 2 -->
<rect x="967" y="862" width="63" height="76" fill="#76736c"/>
<rect x="975" y="863" width="42" height="75" fill="#5e4739"/>
<ellipse cx="996" cy="900" rx="6" ry="14" fill="#8f8478" opacity="0.3"/>
<rect x="1016" y="864" width="6" height="74" fill="#211b17"/>
<!-- woodpile -->
<g clip-path="url(#wpclip)">
<rect x="1020" y="835" width="210" height="110" fill="#8d7862"/>
<polygon points="1027.0,855.6 1046.7,856.1 1043.7,850.5 1029.0,850.0" fill="#bea68c"/>
<polygon points="1048.7,856.1 1066.2,856.7 1063.2,850.6 1050.7,850.0" fill="#bea68c"/>
<polygon points="1069.5,855.5 1087.1,855.9 1084.1,850.4 1071.5,850.0" fill="#826852"/>
<polygon points="1091.1,855.0 1117.7,855.4 1114.7,850.3 1093.1,850.0" fill="#e0d0bc"/>
<polygon points="1027.0,861.9 1048.2,861.7 1045.2,855.3 1029.0,855.5" fill="#a0846a"/>
<polygon points="1049.8,860.7 1067.4,860.6 1064.4,855.5 1051.8,855.5" fill="#bea68c"/>
<polygon points="1071.4,861.0 1095.2,861.2 1092.2,855.8 1073.4,855.5" fill="#d6c6b2"/>
<polygon points="1027.0,867.3 1042.4,867.8 1039.4,861.5 1029.0,861.0" fill="#d6c6b2"/>
<polygon points="1045.6,866.4 1067.3,866.6 1064.3,861.2 1047.6,861.0" fill="#bea68c"/>
<polygon points="1068.5,866.4 1097.7,866.9 1094.7,861.4 1070.5,861.0" fill="#e0d0bc"/>
<polygon points="1027.0,871.1 1043.5,871.2 1040.5,866.7 1029.0,866.5" fill="#bea68c"/>
<polygon points="1045.9,872.7 1070.4,873.5 1067.4,867.4 1047.9,866.5" fill="#826852"/>
<polygon points="1073.4,872.1 1093.0,871.2 1090.0,865.6 1075.4,866.5" fill="#826852"/>
<polygon points="1027.0,877.6 1052.6,878.3 1049.6,872.8 1029.0,872.0" fill="#d6c6b2"/>
<polygon points="1054.9,876.6 1082.9,876.0 1079.9,871.5 1056.9,872.0" fill="#bea68c"/>
<polygon points="1085.4,877.0 1111.6,876.9 1108.6,871.9 1087.4,872.0" fill="#a0846a"/>
<polygon points="1027.0,883.8 1055.6,884.1 1052.6,877.8 1029.0,877.5" fill="#a0846a"/>
<polygon points="1059.0,882.3 1081.3,881.6 1078.3,876.9 1061.0,877.5" fill="#826852"/>
<polygon points="1083.8,883.2 1111.8,883.7 1108.8,878.0 1085.8,877.5" fill="#bea68c"/>
<polygon points="1027.0,889.0 1043.3,889.1 1040.3,883.1 1029.0,883.0" fill="#826852"/>
<polygon points="1045.2,888.5 1067.5,889.0 1064.5,883.5 1047.2,883.0" fill="#826852"/>
<polygon points="1071.2,888.1 1086.1,888.5 1083.1,883.5 1073.2,883.0" fill="#bea68c"/>
<polygon points="1088.6,888.4 1111.6,888.6 1108.6,883.2 1090.6,883.0" fill="#d6c6b2"/>
<polygon points="1027.0,893.9 1049.2,894.0 1046.2,888.6 1029.0,888.5" fill="#a0846a"/>
<polygon points="1051.6,894.8 1080.7,895.5 1077.7,889.3 1053.6,888.5" fill="#826852"/>
<polygon points="1082.5,894.7 1105.4,894.0 1102.4,887.8 1084.5,888.5" fill="#bea68c"/>
<polygon points="1027.0,899.8 1048.1,899.7 1045.1,893.9 1029.0,894.0" fill="#d6c6b2"/>
<polygon points="1049.7,900.3 1068.6,899.7 1065.6,893.4 1051.7,894.0" fill="#d6c6b2"/>
<polygon points="1071.7,899.0 1096.3,898.4 1093.3,893.3 1073.7,894.0" fill="#bea68c"/>
<polygon points="1027.0,904.8 1052.9,904.8 1049.9,899.5 1029.0,899.5" fill="#d6c6b2"/>
<polygon points="1056.9,905.4 1084.2,906.3 1081.2,900.4 1058.9,899.5" fill="#bea68c"/>
<polygon points="1086.4,904.6 1107.2,905.0 1104.2,899.9 1088.4,899.5" fill="#a0846a"/>
<polygon points="1027.0,910.9 1049.9,910.7 1046.9,904.8 1029.0,905.0" fill="#e0d0bc"/>
<polygon points="1052.4,909.7 1071.1,910.5 1068.1,905.8 1054.4,905.0" fill="#d6c6b2"/>
<polygon points="1072.8,910.0 1100.9,909.2 1097.9,904.2 1074.8,905.0" fill="#d6c6b2"/>
<polygon points="1027.0,916.6 1045.3,917.3 1042.3,911.1 1029.0,910.5" fill="#bea68c"/>
<polygon points="1048.4,915.3 1077.5,916.1 1074.5,911.3 1050.4,910.5" fill="#e0d0bc"/>
<polygon points="1080.2,915.6 1105.4,916.1 1102.4,911.0 1082.2,910.5" fill="#d6c6b2"/>
<polygon points="1027.0,922.4 1055.3,922.6 1052.3,916.2 1029.0,916.0" fill="#a0846a"/>
<polygon points="1058.7,920.6 1074.1,921.3 1071.1,916.7 1060.7,916.0" fill="#bea68c"/>
<polygon points="1076.4,921.3 1095.9,922.1 1092.9,916.7 1078.4,916.0" fill="#826852"/>
<polygon points="1027.0,927.9 1041.7,928.7 1038.7,922.3 1029.0,921.5" fill="#bea68c"/>
<polygon points="1043.5,927.3 1060.4,927.3 1057.4,921.6 1045.5,921.5" fill="#a0846a"/>
<polygon points="1062.0,926.5 1083.1,927.1 1080.1,922.0 1064.0,921.5" fill="#bea68c"/>
<polygon points="1087.1,927.5 1101.7,927.6 1098.7,921.6 1089.1,921.5" fill="#d6c6b2"/>
<polygon points="1027.0,931.7 1048.6,932.3 1045.6,927.6 1029.0,927.0" fill="#e0d0bc"/>
<polygon points="1050.9,933.4 1072.8,933.1 1069.8,926.7 1052.9,927.0" fill="#e0d0bc"/>
<polygon points="1074.5,933.2 1092.1,933.5 1089.1,927.4 1076.5,927.0" fill="#bea68c"/>
<polygon points="1027.0,939.0 1047.5,939.6 1044.5,933.1 1029.0,932.5" fill="#a0846a"/>
<polygon points="1048.5,937.9 1072.5,937.1 1069.5,931.7 1050.5,932.5" fill="#a0846a"/>
<polygon points="1075.5,938.3 1095.6,937.9 1092.6,932.1 1077.5,932.5" fill="#826852"/>
<polygon points="1027.0,942.9 1045.7,942.5 1042.7,937.6 1029.0,938.0" fill="#e0d0bc"/>
<polygon points="1046.7,944.4 1066.5,944.5 1063.5,938.1 1048.7,938.0" fill="#a0846a"/>
<polygon points="1068.3,942.9 1097.7,942.4 1094.7,937.4 1070.3,938.0" fill="#a0846a"/>
<polygon points="1098.3,868.9 1092.4,868.0 1095.5,861.8" fill="#e2d6c4"/>
<polygon points="1097.4,930.9 1101.5,935.2 1097.3,941.6 1091.3,934.4" fill="#e2d6c4"/>
<polygon points="1148.3,905.4 1147.6,913.5 1143.3,910.2" fill="#68503e"/>
<polygon points="1101.4,872.5 1104.8,874.4 1101.7,877.4" fill="#68503e"/>
<polygon points="1157.6,896.0 1153.0,891.9 1157.6,887.0 1160.4,892.6" fill="#e2d6c4"/>
<polygon points="1156.8,908.5 1149.2,909.2 1153.0,904.6" fill="#bca68c"/>
<polygon points="1091.6,869.5 1089.6,864.7 1094.6,862.5 1097.3,868.8" fill="#bca68c"/>
<polygon points="1092.6,884.0 1085.5,888.1 1081.3,886.9 1085.5,880.6" fill="#68503e"/>
<polygon points="1170.3,905.5 1169.0,903.4 1170.5,899.4 1173.2,901.8" fill="#e2d6c4"/>
<polygon points="1135.1,864.2 1138.2,874.4 1131.8,874.4 1127.7,867.3" fill="#e2d6c4"/>
<polygon points="1169.5,878.7 1167.0,872.8 1172.3,874.9" fill="#e2d6c4"/>
<polygon points="1132.3,911.6 1130.9,921.5 1126.1,916.7" fill="#e2d6c4"/>
<polygon points="1184.8,882.9 1187.9,879.9 1193.2,883.0 1189.0,889.1" fill="#bca68c"/>
<polygon points="1144.7,864.5 1138.9,861.1 1143.9,857.8" fill="#bca68c"/>
<polygon points="1228.5,886.0 1224.3,884.1 1228.1,882.2" fill="#e2d6c4"/>
<polygon points="1208.6,880.9 1207.3,874.3 1212.0,872.8 1211.9,879.8" fill="#e2d6c4"/>
<polygon points="1124.9,861.9 1126.9,864.3 1120.3,865.4 1121.2,861.9" fill="#e2d6c4"/>
<polygon points="1141.6,936.1 1134.9,932.5 1142.2,927.3 1146.1,933.1" fill="#68503e"/>
<polygon points="1147.1,894.1 1152.4,893.6 1150.0,896.5" fill="#bca68c"/>
<polygon points="1191.9,850.9 1192.5,845.8 1198.0,849.4" fill="#68503e"/>
<polygon points="1180.9,928.6 1175.8,930.9 1176.7,924.0" fill="#e2d6c4"/>
<polygon points="1099.1,861.5 1094.7,863.9 1091.9,859.4 1096.3,858.4" fill="#e2d6c4"/>
<polygon points="1222.3,873.1 1219.7,866.4 1228.4,869.2" fill="#e2d6c4"/>
<polygon points="1214.6,846.9 1212.2,844.0 1218.6,839.9" fill="#68503e"/>
<polygon points="1212.6,918.0 1206.9,914.6 1210.0,906.3 1216.4,912.8" fill="#68503e"/>
<polygon points="1097.8,844.7 1101.7,845.0 1099.5,847.8" fill="#e2d6c4"/>
<polygon points="1183.2,859.4 1181.7,855.1 1187.8,856.3 1188.2,858.9" fill="#e2d6c4"/>
<polygon points="1213.2,869.2 1211.4,862.4 1221.0,860.4 1221.0,867.0" fill="#68503e"/>
<polygon points="1173.2,924.0 1163.6,921.1 1172.7,914.6" fill="#e2d6c4"/>
<polygon points="1104.6,886.7 1105.0,889.3 1102.2,891.2 1101.3,888.4" fill="#68503e"/>
<polygon points="1193.5,864.7 1190.8,865.3 1190.8,861.6 1195.6,862.7" fill="#e2d6c4"/>
<polygon points="1110.0,847.6 1113.4,852.5 1106.0,854.1" fill="#68503e"/>
<polygon points="1138.7,916.8 1135.7,912.9 1139.3,911.5" fill="#e2d6c4"/>
<polygon points="1162.3,906.1 1156.5,904.7 1159.2,902.1" fill="#e2d6c4"/>
<polygon points="1096.7,859.8 1098.3,851.7 1104.4,859.5" fill="#bca68c"/>
<polygon points="1171.4,902.5 1166.7,903.3 1169.9,897.7" fill="#e2d6c4"/>
<polygon points="1143.8,873.1 1146.4,877.8 1138.4,876.9" fill="#e2d6c4"/>
<polygon points="1095.4,852.1 1102.4,852.9 1098.8,857.2 1092.0,856.3" fill="#e2d6c4"/>
<polygon points="1180.1,875.2 1179.6,881.2 1174.6,879.5 1173.7,875.9" fill="#68503e"/>
<polygon points="1175.5,928.7 1178.1,930.1 1177.2,932.9 1173.3,930.4" fill="#bca68c"/>
<polygon points="1197.4,873.5 1194.3,868.4 1203.1,863.5 1205.1,871.7" fill="#e2d6c4"/>
<polygon points="1175.2,902.0 1172.1,902.4 1173.8,897.3" fill="#e2d6c4"/>
<polygon points="1115.2,931.9 1108.6,931.0 1107.7,924.9 1115.1,923.9" fill="#bca68c"/>
<polygon points="1145.9,883.4 1148.4,879.9 1150.5,882.8 1149.5,884.5" fill="#bca68c"/>
<polygon points="1132.8,917.6 1140.5,919.9 1136.7,923.7" fill="#bca68c"/>
<polygon points="1138.3,937.7 1135.5,933.2 1139.7,932.1" fill="#68503e"/>
<polygon points="1215.8,848.3 1216.4,842.4 1221.2,845.7" fill="#bca68c"/>
<polygon points="1171.7,903.8 1165.6,899.9 1170.5,897.5" fill="#e2d6c4"/>
<polygon points="1095.7,890.0 1100.7,886.5 1104.1,893.8 1098.6,895.1" fill="#e2d6c4"/>
<polygon points="1226.8,901.3 1223.4,897.9 1225.4,892.6 1230.9,897.6" fill="#bca68c"/>
<polygon points="1209.4,909.9 1216.0,911.0 1217.4,915.2 1212.0,915.7" fill="#e2d6c4"/>
<polygon points="1131.6,847.7 1136.4,846.7 1136.8,851.1 1134.4,851.2" fill="#e2d6c4"/>
<polygon points="1180.7,923.8 1175.4,931.9 1170.9,927.6 1175.0,922.3" fill="#e2d6c4"/>
<polygon points="1109.0,840.7 1105.3,837.9 1109.6,837.6" fill="#e2d6c4"/>
<polygon points="1108.7,901.2 1116.4,897.5 1114.6,903.5" fill="#bca68c"/>
<polygon points="1138.3,886.8 1134.4,883.9 1137.0,876.0 1142.3,882.0" fill="#e2d6c4"/>
<polygon points="1088.3,907.3 1087.2,903.1 1091.7,897.3 1094.6,904.7" fill="#bca68c"/>
<polygon points="1103.7,933.0 1107.4,927.9 1109.6,932.2" fill="#e2d6c4"/>
<polygon points="1158.6,838.1 1161.9,837.8 1160.0,840.4" fill="#68503e"/>
<polygon points="1085.4,845.8 1091.3,850.0 1086.5,852.2" fill="#e2d6c4"/>
<polygon points="1210.1,914.0 1208.1,918.0 1205.4,915.6" fill="#68503e"/>
<polygon points="1215.7,933.3 1220.6,926.9 1224.4,929.9 1222.3,936.7" fill="#e2d6c4"/>
<polygon points="1093.3,912.9 1095.1,918.1 1087.5,918.5 1087.3,911.8" fill="#bca68c"/>
<polygon points="1113.2,926.8 1115.7,924.3 1116.8,926.9" fill="#68503e"/>
<polygon points="1177.8,920.8 1187.3,919.3 1190.8,923.7 1180.7,926.2" fill="#bca68c"/>
<polygon points="1224.2,897.4 1225.4,892.3 1228.8,895.3" fill="#e2d6c4"/>
<polygon points="1125.1,927.4 1120.6,933.8 1118.1,928.7" fill="#e2d6c4"/>
<polygon points="1161.4,930.2 1156.6,927.7 1156.8,922.6 1161.3,924.6" fill="#bca68c"/>
<polygon points="1132.7,909.8 1126.5,913.7 1126.1,905.8" fill="#e2d6c4"/>
<polygon points="1218.4,940.6 1221.5,936.8 1224.5,939.7" fill="#bca68c"/>
<polygon points="1101.0,856.7 1100.9,861.6 1098.6,861.9 1097.8,857.3" fill="#e2d6c4"/>
<polygon points="1122.2,921.4 1121.9,928.8 1116.6,927.9 1115.7,923.9" fill="#bca68c"/>
<polygon points="1148.0,860.0 1149.9,866.6 1141.8,866.2" fill="#68503e"/>
<polygon points="1143.4,901.7 1146.0,908.8 1142.1,910.8 1136.8,904.3" fill="#e2d6c4"/>
<polygon points="1153.9,847.4 1159.1,844.5 1161.7,849.7 1157.9,852.0" fill="#bca68c"/>
<polygon points="1194.1,854.3 1187.1,849.1 1199.3,848.1" fill="#e2d6c4"/>
<polygon points="1170.5,850.2 1166.7,853.2 1164.5,846.8" fill="#e2d6c4"/>
<polygon points="1108.0,907.5 1111.2,899.1 1116.5,903.3" fill="#68503e"/>
<polygon points="1101.4,918.6 1105.3,922.6 1102.2,927.1 1098.6,924.5" fill="#68503e"/>
<polygon points="1132.8,890.3 1127.5,891.0 1126.4,883.5 1133.3,885.4" fill="#e2d6c4"/>
<polygon points="1168.6,907.2 1164.5,905.8 1167.6,902.8 1171.2,906.1" fill="#e2d6c4"/>
<polygon points="1108.9,933.1 1104.2,929.4 1108.1,924.6 1111.2,927.2" fill="#bca68c"/>
<polygon points="1103.1,886.7 1106.8,889.1 1103.1,890.2" fill="#e2d6c4"/>
<polygon points="1181.9,889.1 1182.8,885.6 1186.4,886.1 1185.7,892.6" fill="#e2d6c4"/>
<polygon points="1135.5,939.7 1128.9,942.1 1130.0,934.7" fill="#bca68c"/>
<polygon points="1160.5,919.0 1156.8,916.9 1159.2,912.8 1162.2,917.4" fill="#e2d6c4"/>
<polygon points="1114.0,890.0 1111.0,889.1 1111.7,886.4 1115.2,886.6" fill="#e2d6c4"/>
<polygon points="1102.4,838.4 1103.1,846.7 1094.5,843.4" fill="#e2d6c4"/>
<polygon points="1184.9,860.8 1176.6,860.7 1183.0,855.8" fill="#e2d6c4"/>
<polygon points="1204.4,920.2 1198.5,919.7 1202.1,914.2 1207.0,916.3" fill="#e2d6c4"/>
<polygon points="1200.1,880.9 1190.6,884.3 1193.6,877.2" fill="#e2d6c4"/>
<polygon points="1096.6,906.2 1100.3,900.5 1100.7,904.5" fill="#e2d6c4"/>
<polygon points="1155.9,863.5 1151.4,869.1 1149.5,863.7" fill="#e2d6c4"/>
<polygon points="1162.6,886.4 1169.1,891.0 1162.5,892.1" fill="#68503e"/>
<polygon points="1185.0,859.0 1186.7,851.9 1192.6,855.9" fill="#bca68c"/>
<polygon points="1226.3,854.1 1223.0,857.7 1215.9,854.6 1221.0,850.5" fill="#e2d6c4"/>
<polygon points="1168.8,934.5 1173.1,933.7 1174.2,940.4 1168.7,942.5" fill="#bca68c"/>
<polygon points="1130.5,868.8 1129.5,863.4 1133.6,865.7" fill="#68503e"/>
<polygon points="1163.1,912.8 1165.4,919.1 1161.3,921.2 1159.9,916.5" fill="#bca68c"/>
<polygon points="1117.3,914.2 1123.7,910.8 1123.4,919.7" fill="#e2d6c4"/>
<polygon points="1130.9,892.2 1127.6,889.3 1131.5,887.8" fill="#e2d6c4"/>
<polygon points="1090.3,936.1 1093.9,940.1 1090.8,942.0 1087.0,937.2" fill="#e2d6c4"/>
<polygon points="1156.8,897.6 1152.5,897.6 1152.3,893.7 1156.4,894.3" fill="#bca68c"/>
<polygon points="1090.4,841.5 1088.8,844.6 1084.4,844.2 1086.2,838.5" fill="#bca68c"/>
<polygon points="1178.0,932.4 1178.6,938.0 1171.6,938.7 1171.9,934.4" fill="#e2d6c4"/>
<polygon points="1091.6,932.0 1085.8,934.4 1084.8,931.1 1089.2,929.8" fill="#bca68c"/>
<polygon points="1127.3,864.6 1131.8,861.9 1132.3,866.9" fill="#bca68c"/>
<polygon points="1107.9,920.9 1109.3,924.6 1104.1,924.1 1105.1,921.3" fill="#bca68c"/>
<polygon points="1201.1,882.9 1205.5,889.5 1200.0,889.8" fill="#e2d6c4"/>
<polygon points="1120.5,844.4 1116.9,838.9 1123.5,838.7" fill="#e2d6c4"/>
<polygon points="1198.1,936.0 1194.4,928.0 1200.3,932.0" fill="#68503e"/>
<polygon points="1126.9,931.4 1123.7,930.9 1123.8,927.2 1127.7,928.8" fill="#bca68c"/>
<polygon points="1139.3,844.5 1133.0,842.2 1135.9,839.6" fill="#e2d6c4"/>
<polygon points="1169.5,887.9 1174.4,887.6 1171.3,890.7" fill="#e2d6c4"/>
<polygon points="1205.8,874.9 1199.3,877.4 1196.0,870.4 1203.5,870.2" fill="#68503e"/>
<polygon points="1189.0,894.3 1187.5,902.2 1179.3,895.9 1185.6,891.5" fill="#e2d6c4"/>
<polygon points="1210.7,867.5 1212.3,864.5 1215.3,867.5 1213.8,869.8" fill="#bca68c"/>
<polygon points="1200.7,843.7 1199.9,839.9 1203.7,840.0" fill="#bca68c"/>
<polygon points="1101.1,857.7 1095.8,858.2 1094.4,854.7 1099.3,854.0" fill="#e2d6c4"/>
<polygon points="1215.7,841.4 1219.6,836.5 1224.5,840.9" fill="#bca68c"/>
<polygon points="1224.2,925.7 1221.2,915.1 1228.7,920.3" fill="#68503e"/>
<polygon points="1100.4,860.1 1097.4,854.9 1101.9,853.4" fill="#e2d6c4"/>
<polygon points="1222.4,839.1 1225.9,838.8 1227.9,843.8 1222.6,845.5" fill="#bca68c"/>
<polygon points="1136.6,856.8 1132.9,857.2 1132.0,852.7 1135.2,853.3" fill="#68503e"/>
<polygon points="1187.2,911.2 1193.2,913.1 1188.5,916.2" fill="#e2d6c4"/>
<polygon points="1132.4,861.7 1130.4,866.1 1126.3,863.6 1127.3,859.3" fill="#bca68c"/>
<polygon points="1113.5,845.2 1114.0,841.4 1116.6,842.6 1115.2,846.5" fill="#bca68c"/>
<polygon points="1108.0,868.9 1109.4,874.7 1104.6,876.0 1102.7,869.9" fill="#bca68c"/>
<polygon points="1100.1,926.0 1103.5,924.4 1102.9,929.2" fill="#bca68c"/>
<polygon points="1136.2,887.2 1136.9,882.4 1142.3,880.9 1141.4,885.8" fill="#bca68c"/>
<polygon points="1163.3,922.4 1157.0,920.9 1162.4,917.2" fill="#e2d6c4"/>
<polygon points="1144.7,932.8 1143.4,930.0 1146.8,928.7 1147.6,931.4" fill="#e2d6c4"/>
<polygon points="1086.5,907.5 1092.0,903.8 1091.3,911.4" fill="#e2d6c4"/>
<polygon points="1222.4,885.0 1225.8,886.1 1225.0,890.1 1219.6,890.0" fill="#bca68c"/>
<polygon points="1122.3,868.3 1130.1,867.6 1129.2,875.5 1123.5,875.5" fill="#bca68c"/>
<polygon points="1166.5,897.3 1169.7,903.8 1161.3,902.5" fill="#bca68c"/>
<polygon points="1183.6,856.2 1182.9,859.4 1178.0,860.0 1177.5,855.4" fill="#bca68c"/>
<polygon points="1086.0,842.7 1090.1,839.9 1093.2,849.0 1085.9,849.2" fill="#bca68c"/>
<polygon points="1123.3,851.5 1118.5,850.8 1121.8,844.6 1125.5,845.4" fill="#bca68c"/>
<polygon points="1119.4,852.9 1116.3,859.6 1111.2,852.2" fill="#e2d6c4"/>
<polygon points="1116.2,879.1 1117.9,874.7 1121.5,874.5 1123.9,880.7" fill="#e2d6c4"/>
<polygon points="1139.6,877.0 1140.0,872.2 1142.8,873.1 1143.0,876.9" fill="#68503e"/>
<polygon points="1092.8,907.3 1086.7,908.0 1090.3,902.0" fill="#e2d6c4"/>
<polygon points="1105.9,877.5 1104.7,869.5 1112.9,874.7" fill="#e2d6c4"/>
<polygon points="1163.8,880.0 1171.8,877.9 1173.3,885.9 1166.0,886.0" fill="#bca68c"/>
<polygon points="1178.3,893.3 1182.7,895.6 1177.3,899.8" fill="#e2d6c4"/>
<polygon points="1201.4,918.3 1197.3,914.8 1203.1,914.2" fill="#bca68c"/>
<polygon points="1208.6,927.5 1211.1,924.0 1213.5,926.8" fill="#e2d6c4"/>
<polygon points="1230.9,884.0 1225.2,881.1 1224.3,877.5 1230.0,874.9" fill="#e2d6c4"/>
<polygon points="1135.7,841.4 1142.2,839.6 1138.8,845.4" fill="#bca68c"/>
<polygon points="1222.7,845.9 1218.1,854.6 1214.7,849.9" fill="#bca68c"/>
<polygon points="1200.1,873.6 1195.9,877.9 1191.3,871.6 1195.2,868.2" fill="#e2d6c4"/>
<polygon points="1178.2,925.9 1182.0,918.7 1187.8,924.7" fill="#bca68c"/>
<polygon points="1197.2,864.4 1202.4,861.7 1201.7,867.7" fill="#68503e"/>
<polygon points="1106.9,910.7 1100.6,914.0 1100.2,906.6" fill="#e2d6c4"/>
<polygon points="1167.7,858.0 1172.7,863.1 1167.2,867.5 1165.1,863.4" fill="#e2d6c4"/>
<polygon points="1138.6,860.7 1134.0,860.4 1136.4,857.0" fill="#e2d6c4"/>
<polygon points="1168.0,845.8 1162.8,845.0 1161.2,840.9 1165.3,839.0" fill="#68503e"/>
<polygon points="1081.1,928.9 1087.4,928.5 1088.2,934.2 1081.0,932.8" fill="#bca68c"/>
<polygon points="1212.6,905.6 1215.2,908.0 1213.4,910.2 1209.9,908.1" fill="#bca68c"/>
<polygon points="1122.4,841.2 1120.2,844.8 1115.4,845.1 1114.8,839.5" fill="#bca68c"/>
<polygon points="1110.0,879.7 1109.4,886.4 1101.2,882.0" fill="#e2d6c4"/>
<polygon points="1158.5,851.2 1158.2,854.4 1155.6,853.7 1155.0,851.2" fill="#e2d6c4"/>
<polygon points="1177.6,897.5 1178.9,893.3 1183.7,894.9 1182.1,900.1" fill="#bca68c"/>
<polygon points="1128.3,905.2 1130.5,900.3 1134.5,903.6 1131.7,909.0" fill="#e2d6c4"/>
<polygon points="1094.7,908.3 1093.8,904.0 1098.7,904.0 1098.0,907.5" fill="#bca68c"/>
<polygon points="1205.1,907.1 1201.3,904.2 1205.1,901.3 1207.7,904.7" fill="#bca68c"/>
<polygon points="1197.7,848.1 1203.4,850.5 1197.7,856.5" fill="#bca68c"/>
<polygon points="1110.6,887.9 1111.9,883.2 1113.3,887.2" fill="#e2d6c4"/>
<polygon points="1101.2,928.6 1105.3,928.3 1104.3,933.5" fill="#68503e"/>
<polygon points="1180.5,919.8 1184.4,920.9 1181.9,924.2 1179.1,921.8" fill="#e2d6c4"/>
<polygon points="1123.2,858.6 1118.3,859.4 1118.4,855.5 1123.2,855.5" fill="#68503e"/>
<polygon points="1107.4,925.0 1107.0,930.5 1100.0,927.4 1102.8,924.9" fill="#bca68c"/>
<polygon points="1200.7,904.7 1204.9,909.1 1199.9,910.3" fill="#e2d6c4"/>
<polygon points="1127.7,847.4 1132.4,852.1 1130.0,855.4 1125.5,852.6" fill="#e2d6c4"/>
<polygon points="1210.4,904.3 1206.2,898.1 1215.4,898.1" fill="#bca68c"/>
<polygon points="1228.0,837.2 1229.8,843.3 1221.9,842.2" fill="#bca68c"/>
<polygon points="1216.3,907.0 1219.4,904.5 1221.9,906.7 1219.5,911.7" fill="#bca68c"/>
<polygon points="1156.2,877.9 1150.8,876.8 1151.0,872.8 1156.4,874.6" fill="#e2d6c4"/>
<polygon points="1108.5,912.3 1103.4,913.7 1101.9,910.4 1107.3,909.1" fill="#bca68c"/>
<polygon points="1188.0,935.4 1184.1,930.4 1191.7,931.2" fill="#e2d6c4"/>
<polygon points="1142.3,863.8 1138.7,857.6 1145.8,855.4" fill="#68503e"/>
<polygon points="1132.3,849.8 1136.3,850.9 1131.9,854.3" fill="#bca68c"/>
<polygon points="1184.1,874.2 1179.5,872.7 1182.9,869.6" fill="#e2d6c4"/>
<polygon points="1085.3,867.3 1089.0,867.2 1092.3,872.4 1085.8,875.2" fill="#e2d6c4"/>
<polygon points="1145.1,897.9 1142.2,893.4 1144.9,888.4 1149.6,892.5" fill="#bca68c"/>
<polygon points="1168.9,875.0 1163.6,878.3 1161.6,873.5 1165.3,872.1" fill="#e2d6c4"/>
<polygon points="1087.6,854.5 1086.1,849.3 1090.9,851.2" fill="#bca68c"/>
<polygon points="1159.5,879.4 1156.7,874.9 1160.1,870.7 1163.1,873.5" fill="#e2d6c4"/>
<polygon points="1194.9,929.4 1204.7,929.8 1201.4,934.6" fill="#e2d6c4"/>
<polygon points="1118.8,879.6 1123.7,879.8 1124.8,884.4 1119.4,883.2" fill="#e2d6c4"/>
<polygon points="1193.7,919.6 1194.9,925.0 1191.1,923.8 1190.1,918.7" fill="#e2d6c4"/>
<polygon points="1193.5,840.9 1193.2,843.8 1187.1,844.2 1188.1,839.6" fill="#e2d6c4"/>
<polygon points="1187.2,849.2 1189.7,845.5 1192.0,850.1" fill="#bca68c"/>
<polygon points="1110.9,900.4 1114.7,899.6 1113.7,903.6" fill="#e2d6c4"/>
<polygon points="1219.0,933.5 1224.7,937.3 1219.9,940.4" fill="#e2d6c4"/>
<polygon points="1215.6,871.4 1218.3,874.1 1214.7,876.1" fill="#68503e"/>
<polygon points="1140.9,891.8 1147.2,895.1 1140.2,897.7" fill="#e2d6c4"/>
<polygon points="1143.1,866.5 1145.1,871.9 1142.0,874.0 1137.9,868.7" fill="#68503e"/>
<polygon points="1193.6,934.8 1193.1,942.8 1183.8,939.5" fill="#bca68c"/>
<polygon points="1156.1,869.2 1162.2,864.5 1167.8,871.4 1161.9,875.0" fill="#e2d6c4"/>
<polygon points="1163.3,899.5 1158.1,905.7 1155.6,898.5" fill="#e2d6c4"/>
<polygon points="1163.3,939.4 1166.1,938.0 1168.4,940.9 1165.4,942.8" fill="#bca68c"/>
<polygon points="1214.5,927.5 1211.8,928.5 1211.5,924.5 1213.9,925.2" fill="#e2d6c4"/>
<polygon points="1139.3,935.5 1143.9,938.0 1141.6,944.6 1136.5,939.8" fill="#e2d6c4"/>
<polygon points="1204.0,864.3 1198.8,867.3 1194.6,863.0 1199.6,859.4" fill="#e2d6c4"/>
<polygon points="1210.8,857.5 1210.9,861.3 1204.3,859.0 1206.5,855.8" fill="#bca68c"/>
<polygon points="1121.6,925.2 1118.2,927.2 1116.0,923.9 1120.3,922.5" fill="#bca68c"/>
<polygon points="1193.7,851.7 1195.8,845.7 1202.2,846.5 1199.8,853.3" fill="#68503e"/>
<polygon points="1141.2,838.6 1147.0,841.0 1142.5,845.3 1137.5,840.7" fill="#bca68c"/>
<polygon points="1087.1,904.8 1094.1,903.9 1094.6,911.6" fill="#bca68c"/>
<polygon points="1125.3,858.4 1131.3,852.9 1136.9,857.7 1128.9,861.9" fill="#e2d6c4"/>
<polygon points="1122.1,879.7 1116.5,878.2 1118.6,873.1 1123.8,875.0" fill="#bca68c"/>
<polygon points="1117.8,930.3 1112.0,934.4 1109.1,932.4 1112.2,928.6" fill="#e2d6c4"/>
<polygon points="1225.6,897.3 1224.5,902.7 1222.0,898.9" fill="#bca68c"/>
<polygon points="1164.2,855.7 1171.3,852.5 1170.9,860.2" fill="#bca68c"/>
<polygon points="1218.8,858.1 1216.1,862.4 1214.9,857.6" fill="#e2d6c4"/>
<polygon points="1093.1,906.3 1094.8,909.5 1092.4,910.9 1090.2,908.8" fill="#68503e"/>
<polygon points="1218.2,907.3 1218.7,904.2 1222.6,903.4 1222.6,908.2" fill="#68503e"/>
<polygon points="1100.1,925.6 1098.0,920.1 1102.6,921.0" fill="#68503e"/>
<polygon points="1203.8,898.8 1211.0,895.7 1211.6,901.6" fill="#e2d6c4"/>
<polygon points="1101.2,838.6 1098.1,841.4 1095.1,837.9 1098.8,836.1" fill="#e2d6c4"/>
<polygon points="1161.2,850.1 1162.2,844.1 1168.1,845.6 1165.8,851.2" fill="#bca68c"/>
<polygon points="1182.9,855.2 1179.8,857.0 1177.3,855.4 1178.9,852.4" fill="#68503e"/>
<polygon points="1159.5,871.2 1163.0,868.9 1163.7,872.8" fill="#bca68c"/>
<polygon points="1204.3,888.3 1211.8,885.8 1211.0,892.8" fill="#e2d6c4"/>
<polygon points="1118.2,840.6 1122.6,838.3 1124.8,843.3 1119.3,844.4" fill="#bca68c"/>
<polygon points="1095.4,869.4 1096.6,875.0 1091.6,874.0" fill="#e2d6c4"/>
<polygon points="1144.6,880.9 1141.4,880.2 1144.3,876.3" fill="#e2d6c4"/>
<polygon points="1231.4,917.2 1230.6,921.5 1223.3,920.1 1224.2,916.1" fill="#bca68c"/>
<polygon points="1137.3,860.7 1128.6,856.9 1131.5,848.8 1138.3,851.5" fill="#bca68c"/>
<polygon points="1207.6,921.7 1197.2,920.5 1201.2,913.0" fill="#e2d6c4"/>
<polygon points="1160.5,929.6 1164.8,922.3 1168.0,929.7" fill="#68503e"/>
<polygon points="1095.9,899.7 1100.1,904.1 1094.3,908.6 1092.1,902.9" fill="#e2d6c4"/>
<polygon points="1132.5,862.6 1130.4,857.2 1136.3,859.3" fill="#68503e"/>
<polygon points="1100.1,909.0 1100.5,905.7 1103.8,909.4" fill="#68503e"/>
<polygon points="1224.9,868.0 1225.1,872.4 1219.7,869.9" fill="#68503e"/>
<polygon points="1167.3,908.3 1162.2,908.3 1162.5,902.5 1167.9,901.9" fill="#bca68c"/>
<polygon points="1190.1,905.4 1185.0,911.5 1181.8,904.1" fill="#68503e"/>
<polygon points="1167.8,884.0 1161.1,888.5 1159.4,884.0 1165.2,880.6" fill="#68503e"/>
<polygon points="1139.3,918.1 1138.6,909.9 1145.3,914.1" fill="#e2d6c4"/>
<polygon points="1135.8,939.6 1134.2,935.8 1141.3,933.7 1141.2,938.3" fill="#bca68c"/>
<polygon points="1132.3,891.2 1128.5,894.8 1124.1,890.5 1127.9,885.5" fill="#68503e"/>
<polygon points="1142.6,911.8 1137.9,907.3 1142.9,903.6 1144.6,907.4" fill="#e2d6c4"/>
<polygon points="1192.8,891.1 1190.4,883.7 1196.3,885.1" fill="#bca68c"/>
<polygon points="1189.5,839.0 1200.0,838.7 1200.0,843.8 1190.4,845.9" fill="#bca68c"/>
<polygon points="1186.7,929.3 1188.1,934.8 1183.5,934.3" fill="#e2d6c4"/>
<polygon points="1133.7,853.2 1137.2,854.8 1137.1,861.1 1129.0,858.2" fill="#bca68c"/>
<polygon points="1169.4,883.4 1162.1,879.7 1170.4,875.7" fill="#e2d6c4"/>
<polygon points="1199.1,902.4 1206.5,899.9 1205.7,906.2 1200.5,907.4" fill="#e2d6c4"/>
<polygon points="1183.0,940.9 1176.0,939.2 1182.3,932.7" fill="#e2d6c4"/>
<polygon points="1228.7,900.3 1222.8,901.3 1222.3,895.9 1227.4,896.2" fill="#e2d6c4"/>
<polygon points="1208.6,921.2 1203.4,924.5 1204.2,916.4" fill="#e2d6c4"/>
<polygon points="1144.0,887.5 1142.5,893.0 1138.6,890.9" fill="#e2d6c4"/>
<polygon points="1146.2,906.2 1152.0,905.7 1150.9,910.3 1145.0,910.8" fill="#e2d6c4"/>
<polygon points="1192.2,913.4 1194.3,917.4 1191.8,919.0 1187.7,918.3" fill="#bca68c"/>
<polygon points="1185.3,901.6 1190.0,899.4 1187.9,905.2" fill="#e2d6c4"/>
<polygon points="1084.3,913.2 1085.6,907.5 1094.2,911.0" fill="#e2d6c4"/>
<polygon points="1225.8,927.1 1220.1,924.4 1225.1,919.6 1228.9,923.3" fill="#e2d6c4"/>
<polygon points="1142.5,924.7 1134.9,924.8 1141.2,917.8" fill="#e2d6c4"/>
<polygon points="1194.1,862.1 1192.7,855.2 1196.9,855.6 1201.0,861.0" fill="#68503e"/>
<polygon points="1098.9,921.6 1101.9,928.9 1096.9,933.9 1092.8,924.9" fill="#e2d6c4"/>
<polygon points="1148.3,926.9 1154.5,926.0 1155.9,930.3 1148.1,930.7" fill="#e2d6c4"/>
<polygon points="1192.9,841.6 1188.9,842.8 1190.3,838.7" fill="#68503e"/>
<polygon points="1172.4,930.9 1177.4,930.0 1178.5,933.6" fill="#e2d6c4"/>
<polygon points="1175.5,867.2 1174.9,875.1 1169.1,873.1 1170.7,866.8" fill="#68503e"/>
<polygon points="1093.8,840.7 1098.1,840.8 1095.9,846.6 1090.8,845.0" fill="#e2d6c4"/>
<polygon points="1178.3,935.9 1186.2,937.5 1183.2,940.8 1177.8,940.4" fill="#e2d6c4"/>
<polygon points="1158.8,897.4 1152.2,898.4 1154.9,893.7" fill="#e2d6c4"/>
<polygon points="1177.6,902.5 1174.2,909.4 1168.5,900.7" fill="#bca68c"/>
<polygon points="1211.1,861.0 1206.9,854.9 1216.3,852.7" fill="#e2d6c4"/>
<polygon points="1178.4,937.5 1174.5,934.0 1180.8,927.7 1183.7,933.1" fill="#68503e"/>
<polygon points="1199.5,930.9 1193.7,931.5 1193.0,925.0" fill="#bca68c"/>
<polygon points="1119.2,841.4 1116.0,848.0 1110.4,846.6 1113.8,838.5" fill="#e2d6c4"/>
<polygon points="1145.0,844.0 1150.5,849.8 1144.4,855.7" fill="#bca68c"/>
<polygon points="1111.2,859.3 1117.8,863.6 1113.7,868.0" fill="#bca68c"/>
<polygon points="1138.9,850.8 1137.6,854.4 1134.1,853.2 1135.7,849.3" fill="#bca68c"/>
<polygon points="1209.1,881.1 1210.7,887.4 1207.4,887.1 1204.0,884.0" fill="#e2d6c4"/>
<polygon points="1111.6,906.6 1105.3,908.3 1104.4,901.6" fill="#bca68c"/>
<polygon points="1091.1,869.7 1091.4,866.1 1094.7,865.6 1095.3,869.2" fill="#68503e"/>
<polygon points="1197.3,863.3 1201.4,867.6 1196.7,869.3" fill="#bca68c"/>
<polygon points="1087.6,848.5 1084.5,852.0 1082.5,848.5 1085.5,845.5" fill="#e2d6c4"/>
<polygon points="1115.2,884.2 1115.5,880.9 1119.2,882.1 1118.2,886.3" fill="#e2d6c4"/>
<polygon points="1218.7,879.2 1216.0,876.0 1219.9,874.2" fill="#e2d6c4"/>
<polygon points="1153.1,913.9 1149.6,915.3 1148.6,911.4 1151.9,910.4" fill="#e2d6c4"/>
<polygon points="1196.6,930.0 1204.4,926.9 1203.7,934.4" fill="#bca68c"/>
<polygon points="1217.0,909.9 1224.6,915.3 1216.6,915.8" fill="#e2d6c4"/>
<polygon points="1227.7,922.0 1225.5,927.6 1221.6,922.2" fill="#e2d6c4"/>
<polygon points="1158.9,937.8 1154.7,933.5 1161.6,932.6" fill="#68503e"/>
<polygon points="1088.2,851.8 1092.8,855.4 1087.9,859.5 1085.3,855.6" fill="#bca68c"/>
<polygon points="1124.2,894.5 1120.0,897.2 1120.3,893.5" fill="#e2d6c4"/>
<polygon points="1204.2,917.3 1202.0,921.4 1198.2,919.3" fill="#bca68c"/>
<polygon points="1101.0,837.3 1099.0,843.6 1096.0,838.7" fill="#e2d6c4"/>
<polygon points="1104.1,861.9 1105.3,865.9 1097.9,864.7 1099.1,859.7" fill="#bca68c"/>
<polygon points="1115.4,871.9 1121.5,875.3 1114.8,877.2" fill="#bca68c"/>
<polygon points="1137.3,915.4 1135.1,922.1 1128.6,918.0 1133.6,909.0" fill="#68503e"/>
<polygon points="1119.8,914.5 1116.1,914.9 1114.7,911.5 1119.1,911.2" fill="#bca68c"/>
<polygon points="1165.1,937.8 1163.7,931.6 1168.8,931.2 1170.9,935.8" fill="#e2d6c4"/>
<polygon points="1160.4,860.5 1162.1,857.0 1166.5,859.4" fill="#bca68c"/>
<polygon points="1193.2,839.2 1197.8,840.6 1194.4,846.1 1190.4,844.2" fill="#bca68c"/>
<polygon points="1188.2,937.8 1185.7,940.6 1184.8,937.1" fill="#e2d6c4"/>
<polygon points="1124.5,843.7 1119.4,846.1 1120.6,841.2" fill="#e2d6c4"/>
<polygon points="1106.5,895.6 1107.9,902.7 1099.3,901.3" fill="#68503e"/>
<polygon points="1093.6,850.1 1098.0,855.4 1093.6,857.3 1090.1,852.4" fill="#e2d6c4"/>
<polygon points="1173.5,859.5 1177.7,861.6 1175.5,866.0 1171.4,862.9" fill="#e2d6c4"/>
<polygon points="1117.1,871.1 1109.2,872.0 1113.6,864.5" fill="#e2d6c4"/>
<polygon points="1144.3,892.0 1140.0,895.3 1139.1,889.0 1141.8,889.1" fill="#bca68c"/>
<polygon points="1156.6,888.8 1160.3,891.4 1157.1,894.9 1154.0,891.4" fill="#bca68c"/>
<polygon points="1154.1,906.8 1158.1,909.7 1153.6,916.6 1146.9,911.3" fill="#e2d6c4"/>
<polygon points="1219.9,897.7 1218.7,892.8 1221.8,893.7" fill="#bca68c"/>
<polygon points="1095.6,935.6 1099.7,934.8 1098.3,938.1" fill="#e2d6c4"/>
<polygon points="1136.5,921.0 1143.0,915.6 1142.1,923.7" fill="#e2d6c4"/>
<polygon points="1116.5,853.2 1122.2,854.1 1119.6,861.9 1112.9,858.2" fill="#bca68c"/>
<polygon points="1117.1,891.4 1115.7,882.8 1120.9,882.3 1125.5,886.7" fill="#e2d6c4"/>
<polygon points="1198.2,866.8 1195.4,863.5 1197.3,861.7 1200.3,863.0" fill="#e2d6c4"/>
<polygon points="1087.5,904.1 1086.9,910.4 1082.1,908.5" fill="#bca68c"/>
<polygon points="1152.3,870.7 1159.3,867.7 1156.7,875.8" fill="#e2d6c4"/>
<polygon points="1107.2,928.5 1105.9,937.8 1098.9,935.2" fill="#bca68c"/>
<polygon points="1204.2,916.4 1202.9,910.7 1208.2,910.9" fill="#e2d6c4"/>
<polygon points="1110.5,889.1 1108.4,883.6 1114.2,882.5 1115.5,887.4" fill="#68503e"/>
<polygon points="1094.5,902.2 1097.2,894.6 1105.2,896.0 1100.5,903.8" fill="#bca68c"/>
<polygon points="1177.6,893.4 1182.5,897.5 1175.4,897.6" fill="#bca68c"/>
<polygon points="1117.6,917.0 1112.6,916.5 1115.1,909.2 1120.7,913.0" fill="#e2d6c4"/>
<polygon points="1198.3,839.4 1193.9,845.3 1186.5,838.9 1193.6,834.8" fill="#bca68c"/>
<polygon points="1214.8,858.2 1217.8,856.7 1217.5,861.3" fill="#bca68c"/>
<polygon points="1173.9,866.4 1169.2,866.3 1168.0,862.7 1171.2,860.7" fill="#e2d6c4"/>
<polygon points="1118.4,850.2 1123.2,857.8 1114.0,856.5" fill="#68503e"/>
<polygon points="1221.8,885.2 1217.8,883.8 1219.0,881.3 1221.1,881.6" fill="#e2d6c4"/>
<polygon points="1140.3,903.1 1142.7,898.3 1146.2,903.4" fill="#e2d6c4"/>
<polygon points="1191.0,899.0 1195.1,895.0 1196.6,900.3" fill="#e2d6c4"/>
<polygon points="1095.9,909.7 1100.3,911.5 1099.8,915.8 1095.5,915.2" fill="#bca68c"/>
<polygon points="1184.8,932.9 1179.4,939.6 1178.4,931.8" fill="#e2d6c4"/>
<polygon points="1133.3,939.4 1131.1,930.5 1136.8,934.2" fill="#e2d6c4"/>
<polygon points="1122.2,889.6 1125.3,889.4 1124.4,892.9 1122.1,892.7" fill="#bca68c"/>
<polygon points="1135.1,936.1 1133.4,930.7 1136.3,926.6 1139.7,930.9" fill="#e2d6c4"/>
<polygon points="1118.8,881.6 1116.1,885.9 1113.9,881.3" fill="#68503e"/>
<polygon points="1190.4,923.6 1193.5,923.7 1192.9,929.3" fill="#e2d6c4"/>
<polygon points="1174.5,847.0 1177.4,849.2 1176.0,851.4 1172.0,851.8" fill="#e2d6c4"/>
<polygon points="1228.4,907.1 1229.5,912.1 1223.9,909.8" fill="#e2d6c4"/>
<polygon points="1160.9,927.2 1165.7,928.0 1161.8,930.4" fill="#e2d6c4"/>
<polygon points="1100.8,854.6 1107.8,853.1 1106.9,859.0" fill="#bca68c"/>
<polygon points="1115.9,877.1 1112.9,880.4 1106.3,879.3 1111.0,871.6" fill="#e2d6c4"/>
<polygon points="1203.1,934.5 1207.7,941.1 1198.9,943.9 1197.1,937.4" fill="#e2d6c4"/>
<polygon points="1087.8,880.2 1091.3,878.8 1092.8,882.1 1090.0,884.7" fill="#e2d6c4"/>
<polygon points="1150.5,914.1 1146.4,915.2 1145.1,910.9 1150.8,909.8" fill="#bca68c"/>
<polygon points="1223.9,881.5 1228.0,877.6 1231.6,878.9 1230.1,885.4" fill="#68503e"/>
<polygon points="1087.8,941.8 1089.5,935.5 1094.4,939.0" fill="#bca68c"/>
<polygon points="1097.7,914.8 1098.4,923.4 1090.7,920.9 1092.8,914.1" fill="#e2d6c4"/>
<polygon points="1202.4,864.4 1206.1,862.8 1205.8,867.3" fill="#68503e"/>
<polygon points="1225.1,920.6 1221.1,917.8 1222.3,912.2 1228.0,915.6" fill="#bca68c"/>
<polygon points="1110.3,866.6 1110.0,861.3 1114.7,861.9 1114.6,868.3" fill="#e2d6c4"/>
<polygon points="1173.8,852.4 1165.6,857.9 1166.4,850.9" fill="#e2d6c4"/>
<polygon points="1086.0,856.8 1089.1,855.6 1090.5,860.2 1086.3,861.1" fill="#e2d6c4"/>
<polygon points="1135.3,896.7 1138.2,899.8 1133.4,902.2" fill="#68503e"/>
<polygon points="1195.4,862.5 1192.3,864.0 1190.4,859.5" fill="#e2d6c4"/>
<polygon points="1130.8,895.7 1127.8,897.1 1128.9,894.1" fill="#e2d6c4"/>
<polygon points="1214.0,889.1 1210.5,893.7 1206.8,889.7 1210.7,887.5" fill="#68503e"/>
<polygon points="1208.3,838.8 1211.4,838.9 1211.7,842.1 1208.4,841.7" fill="#e2d6c4"/>
<polygon points="1105.5,856.0 1104.3,850.1 1111.5,853.5" fill="#68503e"/>
<polygon points="1119.9,857.1 1113.5,853.0 1118.7,848.2 1124.3,852.8" fill="#e2d6c4"/>
<polygon points="1152.2,894.6 1144.9,887.5 1151.4,883.7" fill="#bca68c"/>
<polygon points="1093.7,922.0 1092.9,914.5 1097.0,916.4" fill="#bca68c"/>
<polygon points="1102.1,927.4 1098.0,921.0 1105.0,922.3" fill="#e2d6c4"/>
<polygon points="1118.3,857.2 1117.4,861.8 1113.5,859.0" fill="#e2d6c4"/>
<polygon points="1230.9,872.8 1226.2,874.2 1225.6,870.2" fill="#bca68c"/>
<polygon points="1122.6,905.5 1118.9,902.4 1121.9,897.9 1124.3,901.1" fill="#bca68c"/>
<polygon points="1155.1,848.2 1155.6,854.0 1148.6,853.7" fill="#bca68c"/>
<polygon points="1124.8,858.5 1119.3,859.2 1120.3,852.1 1127.9,854.2" fill="#e2d6c4"/>
<polygon points="1125.6,848.5 1116.8,854.2 1117.9,845.1" fill="#e2d6c4"/>
<polygon points="1196.5,930.9 1194.1,924.1 1202.6,925.7" fill="#68503e"/>
<polygon points="1171.3,903.4 1175.6,903.2 1174.4,908.2 1171.3,906.4" fill="#e2d6c4"/>
<polygon points="1217.6,887.3 1220.9,891.4 1214.6,893.4 1214.7,888.1" fill="#e2d6c4"/>
<polygon points="1094.3,870.5 1099.7,873.2 1099.6,877.0 1093.3,879.4" fill="#68503e"/>
<polygon points="1156.4,911.6 1158.4,902.4 1163.6,905.2" fill="#68503e"/>
<polygon points="1214.7,840.5 1216.0,844.4 1212.1,844.2 1210.2,840.6" fill="#e2d6c4"/>
<polygon points="1202.5,875.8 1205.1,868.6 1210.7,868.8 1207.3,878.3" fill="#68503e"/>
<polygon points="1227.9,879.1 1225.0,881.0 1223.5,876.6 1227.7,876.3" fill="#bca68c"/>
<polygon points="1094.6,907.8 1098.9,905.9 1102.3,913.4 1096.3,913.4" fill="#e2d6c4"/>
<polygon points="1115.9,872.4 1111.7,869.9 1115.5,866.6" fill="#e2d6c4"/>
<polygon points="1085.0,922.2 1088.3,914.3 1094.0,916.9 1090.9,925.3" fill="#e2d6c4"/>
<polygon points="1111.7,935.1 1107.6,941.5 1102.0,940.1 1104.9,932.7" fill="#bca68c"/>
<polygon points="1147.9,882.5 1143.7,889.1 1139.0,883.8 1143.9,879.9" fill="#e2d6c4"/>
<polygon points="1129.3,896.8 1137.2,898.6 1131.3,903.6" fill="#e2d6c4"/>
<polygon points="1183.0,852.7 1178.5,850.8 1180.4,847.4 1183.9,848.3" fill="#e2d6c4"/>
<polygon points="1106.7,936.8 1102.9,931.8 1106.9,927.8 1112.4,929.2" fill="#e2d6c4"/>
<polygon points="1182.9,860.9 1188.8,864.3 1182.0,866.9" fill="#e2d6c4"/>
<polygon points="1122.7,866.3 1126.9,867.8 1121.9,871.2" fill="#68503e"/>
<polygon points="1103.7,840.6 1112.2,839.8 1109.5,850.4" fill="#e2d6c4"/>
<polygon points="1223.3,837.0 1221.6,843.6 1217.1,839.3" fill="#e2d6c4"/>
<polygon points="1090.2,873.6 1086.0,874.5 1086.7,870.6" fill="#e2d6c4"/>
<polygon points="1224.8,895.8 1228.2,903.2 1216.8,900.1" fill="#bca68c"/>
<polygon points="1210.8,850.2 1213.6,854.4 1206.5,855.6 1205.2,851.6" fill="#e2d6c4"/>
<polygon points="1092.5,884.9 1098.9,877.1 1101.5,882.4 1098.3,888.3" fill="#e2d6c4"/>
<polygon points="1174.2,880.2 1179.2,875.0 1182.2,882.6" fill="#e2d6c4"/>
<polygon points="1095.1,863.3 1101.5,862.6 1102.2,868.2 1096.3,870.4" fill="#bca68c"/>
<polygon points="1167.1,924.5 1168.9,932.7 1161.6,929.3" fill="#e2d6c4"/>
<polygon points="1096.3,877.5 1102.5,878.0 1096.7,882.4" fill="#e2d6c4"/>
<polygon points="1171.5,859.2 1167.2,862.6 1166.9,853.6" fill="#bca68c"/>
<polygon points="1117.6,915.9 1116.0,921.5 1114.1,915.5" fill="#bca68c"/>
<polygon points="1130.7,861.5 1130.4,866.4 1124.8,864.3" fill="#68503e"/>
<polygon points="1153.7,866.5 1150.5,862.9 1153.2,860.0 1157.6,863.3" fill="#e2d6c4"/>
<polygon points="1084.3,861.7 1085.8,859.2 1090.6,860.3 1089.2,863.6" fill="#e2d6c4"/>
<polygon points="1197.5,921.7 1197.2,924.5 1190.1,923.9 1193.9,919.0" fill="#e2d6c4"/>
<polygon points="1106.5,908.9 1097.2,911.0 1098.1,904.6" fill="#e2d6c4"/>
<polygon points="1184.3,910.7 1189.7,911.7 1185.9,914.3" fill="#bca68c"/>
<polygon points="1182.6,869.9 1177.3,867.2 1182.1,863.2" fill="#e2d6c4"/>
<polygon points="1112.8,880.8 1107.2,879.3 1111.7,875.3" fill="#e2d6c4"/>
<polygon points="1115.6,882.9 1118.2,888.9 1111.8,891.0 1109.4,884.6" fill="#e2d6c4"/>
<polygon points="1172.7,856.2 1167.9,856.0 1172.5,852.4" fill="#e2d6c4"/>
<polygon points="1146.5,917.3 1145.5,915.4 1147.9,914.1 1149.4,915.9" fill="#68503e"/>
<polygon points="1094.1,849.5 1094.1,845.4 1098.7,847.5" fill="#bca68c"/>
<polygon points="1225.8,890.6 1225.4,897.9 1221.2,892.1" fill="#e2d6c4"/>
<polygon points="1155.0,861.0 1151.2,857.1 1156.4,854.2 1159.2,857.0" fill="#e2d6c4"/>
<polygon points="1154.3,909.6 1158.3,908.5 1159.0,914.8 1154.6,913.1" fill="#e2d6c4"/>
<polygon points="1164.6,847.4 1165.5,853.8 1159.4,855.3 1157.9,849.1" fill="#e2d6c4"/>
<polygon points="1102.9,885.4 1099.0,889.9 1095.2,884.3" fill="#bca68c"/>
<polygon points="1224.7,872.8 1218.9,868.1 1222.4,862.3 1228.7,864.3" fill="#e2d6c4"/>
<polygon points="1190.2,930.9 1190.6,939.1 1183.4,935.1 1184.7,930.7" fill="#68503e"/>
<polygon points="1092.7,929.5 1100.9,926.7 1096.7,932.4" fill="#e2d6c4"/>
<polygon points="1093.2,864.8 1094.7,855.8 1099.2,861.6" fill="#68503e"/>
<polygon points="1121.1,843.8 1117.3,839.2 1122.3,840.0" fill="#bca68c"/>
<polygon points="1203.2,838.3 1207.4,836.6 1209.6,841.0 1204.0,844.3" fill="#68503e"/>
<polygon points="1191.1,900.6 1197.1,899.2 1200.7,903.4 1193.1,905.4" fill="#68503e"/>
<polygon points="1173.5,934.5 1179.2,929.9 1184.1,930.9 1179.8,938.9" fill="#e2d6c4"/>
<polygon points="1119.4,859.0 1113.9,862.7 1111.0,858.2 1112.7,855.4" fill="#e2d6c4"/>
<polygon points="1087.5,889.3 1083.5,887.6 1086.5,883.7 1090.5,885.0" fill="#68503e"/>
<polygon points="1084.8,845.2 1081.9,838.9 1090.5,843.3" fill="#e2d6c4"/>
<polygon points="1226.9,922.8 1220.7,926.7 1221.0,921.2" fill="#bca68c"/>
<polygon points="1101.4,908.6 1093.6,904.9 1097.3,900.5" fill="#e2d6c4"/>
<polygon points="1177.6,869.3 1178.1,861.0 1184.1,865.1" fill="#68503e"/>
<polygon points="1114.0,922.7 1118.2,919.6 1120.0,924.4" fill="#68503e"/>
<polygon points="1212.4,844.2 1213.2,840.6 1217.8,842.7" fill="#bca68c"/>
<polygon points="1115.0,875.4 1120.1,875.7 1121.2,879.2 1116.3,878.0" fill="#bca68c"/>
<polygon points="1153.8,923.8 1146.7,927.8 1144.0,922.2 1149.6,917.4" fill="#e2d6c4"/>
<polygon points="1089.8,872.0 1094.6,869.3 1095.7,872.8 1092.2,873.4" fill="#e2d6c4"/>
<polygon points="1213.7,852.4 1212.2,857.5 1208.0,852.5" fill="#68503e"/>
<polygon points="1224.5,868.0 1230.5,870.8 1226.0,876.6 1221.3,874.1" fill="#68503e"/>
<polygon points="1138.9,856.2 1132.4,853.1 1141.9,851.2" fill="#e2d6c4"/>
<polygon points="1201.5,890.9 1201.5,895.4 1198.0,894.7 1196.8,890.8" fill="#e2d6c4"/>
<polygon points="1210.6,883.1 1206.6,881.2 1208.0,875.6 1212.4,879.7" fill="#e2d6c4"/>
<polygon points="1142.9,870.3 1141.9,867.3 1146.0,864.9 1147.0,868.2" fill="#e2d6c4"/>
<polygon points="1206.2,864.5 1211.1,861.8 1208.4,866.9" fill="#e2d6c4"/>
<polygon points="1173.3,891.4 1179.6,891.9 1179.6,899.6 1170.7,896.2" fill="#e2d6c4"/>
<polygon points="1151.0,936.6 1153.7,933.2 1155.9,937.6" fill="#68503e"/>
<polygon points="1114.3,912.1 1119.5,916.2 1113.2,917.3" fill="#e2d6c4"/>
<polygon points="1136.3,908.4 1134.1,902.4 1141.2,901.0 1140.7,907.9" fill="#e2d6c4"/>
<polygon points="1141.5,861.9 1141.4,853.2 1146.7,850.9 1149.3,859.2" fill="#bca68c"/>
<polygon points="1092.5,865.9 1093.8,868.8 1092.6,871.1 1089.9,867.6" fill="#e2d6c4"/>
<polygon points="1214.7,920.1 1218.1,920.4 1217.7,924.8 1214.2,923.8" fill="#e2d6c4"/>
<polygon points="1120.9,856.9 1119.5,859.6 1114.2,857.3 1116.0,855.1" fill="#68503e"/>
<polygon points="1134.1,867.5 1133.2,864.4 1138.5,863.6 1138.4,867.9" fill="#68503e"/>
<polygon points="1163.6,858.0 1167.8,856.9 1170.1,860.7 1166.2,863.5" fill="#bca68c"/>
<polygon points="1136.4,918.2 1140.6,913.4 1142.2,918.0" fill="#e2d6c4"/>
<polygon points="1179.1,919.2 1177.1,911.0 1182.5,914.8" fill="#e2d6c4"/>
<polygon points="1125.4,928.3 1128.7,930.6 1127.6,934.1 1123.3,932.4" fill="#e2d6c4"/>
<polygon points="1216.8,872.5 1215.3,868.3 1218.7,863.2 1225.0,866.7" fill="#bca68c"/>
<polygon points="1090.0,925.7 1085.3,925.7 1085.8,921.6 1090.4,922.1" fill="#e2d6c4"/>
<polygon points="1141.5,889.3 1138.9,894.4 1132.5,895.2 1135.2,887.6" fill="#e2d6c4"/>
<polygon points="1218.6,930.4 1215.1,928.4 1217.1,925.9" fill="#bca68c"/>
<polygon points="1120.0,891.0 1117.3,894.6 1112.7,890.8 1116.9,886.8" fill="#e2d6c4"/>
<polygon points="1211.1,852.5 1207.1,854.3 1205.1,850.6 1209.1,848.8" fill="#bca68c"/>
<polygon points="1150.9,935.3 1160.3,933.5 1155.3,940.8" fill="#e2d6c4"/>
<polygon points="1183.8,876.2 1188.0,881.1 1180.5,882.9 1178.9,879.6" fill="#e2d6c4"/>
<polygon points="1136.2,895.5 1132.3,900.1 1130.2,896.0" fill="#bca68c"/>
<polygon points="1142.9,901.1 1146.1,894.1 1152.9,900.2" fill="#e2d6c4"/>
<polygon points="1123.0,844.6 1117.3,844.5 1114.0,838.3 1121.7,836.0" fill="#bca68c"/>
<polygon points="1204.8,909.8 1208.1,912.8 1204.7,915.7 1203.4,912.7" fill="#bca68c"/>
<polygon points="1102.8,931.9 1099.7,935.4 1098.1,930.6" fill="#e2d6c4"/>
<polygon points="1088.5,927.6 1092.7,933.2 1084.9,933.7" fill="#68503e"/>
<polygon points="1107.6,869.5 1111.7,875.5 1103.1,876.8" fill="#68503e"/>
<polygon points="1162.9,850.4 1169.2,850.4 1171.0,855.1 1165.1,857.2" fill="#e2d6c4"/>
<polygon points="1133.8,879.2 1136.5,875.1 1138.4,878.8" fill="#e2d6c4"/>
<polygon points="1164.9,850.4 1167.5,851.7 1166.9,856.0 1162.4,854.0" fill="#bca68c"/>
<polygon points="1150.6,852.6 1145.8,851.6 1146.2,849.1 1149.6,848.7" fill="#68503e"/>
<polygon points="1203.2,908.2 1196.6,908.7 1201.3,903.2" fill="#68503e"/>
<polygon points="1114.4,869.1 1120.5,868.9 1118.8,875.2 1114.7,874.4" fill="#e2d6c4"/>
<polygon points="1118.1,934.5 1121.4,931.0 1123.4,935.1" fill="#bca68c"/>
<polygon points="1121.0,934.3 1119.5,927.4 1127.8,929.4" fill="#e2d6c4"/>
<polygon points="1192.5,854.0 1191.2,860.9 1184.6,855.7 1189.3,851.5" fill="#e2d6c4"/>
<polygon points="1118.5,939.2 1113.6,941.7 1107.4,937.4 1114.6,934.0" fill="#e2d6c4"/>
<polygon points="1181.0,917.2 1178.7,913.9 1182.4,912.3" fill="#68503e"/>
<polygon points="1128.9,918.3 1137.1,917.6 1133.7,924.5" fill="#bca68c"/>
<polygon points="1114.3,889.9 1110.2,890.3 1108.5,886.4 1113.7,885.0" fill="#68503e"/>
<polygon points="1098.4,861.8 1095.7,856.4 1099.7,854.2 1103.1,858.0" fill="#68503e"/>
<polygon points="1218.3,865.3 1216.3,864.8 1216.9,860.8 1221.0,862.0" fill="#bca68c"/>
<polygon points="1212.2,884.2 1214.4,884.9 1212.0,888.6" fill="#68503e"/>
<polygon points="1207.0,933.7 1211.2,933.6 1210.8,938.8 1206.8,938.6" fill="#e2d6c4"/>
<polygon points="1127.5,860.1 1132.0,858.7 1133.5,864.9 1127.7,864.5" fill="#bca68c"/>
<polygon points="1168.0,853.8 1175.1,851.4 1171.7,856.4" fill="#68503e"/>
<polygon points="1103.7,911.5 1107.7,914.2 1108.5,919.3 1102.7,918.8" fill="#e2d6c4"/>
<polygon points="1092.4,907.0 1096.9,910.0 1091.0,913.8 1089.0,911.4" fill="#bca68c"/>
<polygon points="1219.8,843.7 1223.9,838.6 1228.1,843.0" fill="#bca68c"/>
<polygon points="1176.2,925.5 1173.2,917.6 1179.4,919.0" fill="#68503e"/>
<polygon points="1206.5,919.8 1210.7,926.1 1204.5,930.6 1204.2,923.4" fill="#bca68c"/>
<polygon points="1151.1,847.7 1147.2,855.1 1143.6,850.8 1145.0,846.4" fill="#e2d6c4"/>
<polygon points="1205.9,874.0 1203.0,880.4 1197.8,872.5" fill="#bca68c"/>
<polygon points="1143.3,891.9 1151.0,887.2 1152.7,892.8 1147.5,897.9" fill="#68503e"/>
<polygon points="1190.3,891.4 1187.1,897.6 1181.8,891.1" fill="#bca68c"/>
<polygon points="1127.8,902.4 1131.1,905.9 1126.0,910.3 1122.2,908.1" fill="#bca68c"/>
<polygon points="1132.2,899.9 1133.3,905.9 1128.2,906.3 1128.8,899.8" fill="#e2d6c4"/>
<polygon points="1193.0,928.5 1198.4,934.7 1189.1,938.2 1189.1,931.3" fill="#e2d6c4"/>
<polygon points="1114.1,888.2 1115.2,886.3 1118.0,889.3 1115.4,891.6" fill="#e2d6c4"/>
<polygon points="1217.5,938.8 1215.9,932.2 1223.5,933.2" fill="#e2d6c4"/>
<polygon points="1159.2,887.6 1157.6,880.6 1162.9,880.7 1163.1,889.2" fill="#e2d6c4"/>
<polygon points="1159.8,862.5 1165.0,863.9 1164.0,869.6 1158.2,869.1" fill="#68503e"/>
<polygon points="1162.5,854.2 1165.1,847.4 1170.7,856.5" fill="#e2d6c4"/>
<polygon points="1102.9,880.4 1105.5,885.1 1100.9,886.3" fill="#bca68c"/>
<polygon points="1122.0,850.3 1115.6,848.7 1118.8,845.2" fill="#68503e"/>
<polygon points="1110.6,882.6 1102.2,881.5 1103.9,875.2 1111.3,877.9" fill="#e2d6c4"/>
<polygon points="1099.7,905.4 1098.3,896.1 1104.5,897.7 1106.2,904.9" fill="#e2d6c4"/>
<polygon points="1106.3,881.4 1102.1,873.8 1110.8,873.5" fill="#68503e"/>
<polygon points="1211.4,859.1 1205.3,861.3 1209.5,855.6" fill="#68503e"/>
<polygon points="1142.1,900.8 1139.1,895.2 1145.0,894.5" fill="#e2d6c4"/>
<polygon points="1122.2,916.0 1123.4,917.7 1121.5,920.5 1119.2,918.8" fill="#e2d6c4"/>
<polygon points="1229.2,921.5 1225.1,926.3 1220.6,919.6" fill="#e2d6c4"/>
<polygon points="1177.6,869.9 1175.7,873.9 1171.4,868.3 1174.0,867.1" fill="#68503e"/>
<polygon points="1099.9,918.0 1096.0,908.8 1104.5,911.8" fill="#bca68c"/>
<polygon points="1116.0,903.6 1119.4,905.5 1117.0,912.4 1113.5,910.2" fill="#bca68c"/>
<polygon points="1113.9,859.8 1116.7,851.5 1121.1,855.5" fill="#e2d6c4"/>
<polygon points="1111.1,940.7 1111.6,935.8 1115.2,937.8" fill="#e2d6c4"/>
<polygon points="1097.9,867.6 1100.7,871.5 1096.1,870.9" fill="#e2d6c4"/>
<polygon points="1164.4,876.0 1167.2,875.8 1167.7,879.5 1163.0,880.3" fill="#e2d6c4"/>
<polygon points="1213.1,892.9 1217.7,895.6 1216.2,901.7 1210.4,899.5" fill="#bca68c"/>
<polygon points="1102.8,853.7 1109.1,852.1 1109.7,856.7" fill="#e2d6c4"/>
<polygon points="1102.6,887.7 1109.1,889.6 1104.2,891.8" fill="#bca68c"/>
<polygon points="1216.1,879.8 1224.6,883.2 1220.3,887.9" fill="#e2d6c4"/>
<polygon points="1207.0,929.5 1198.7,924.3 1208.0,923.0" fill="#e2d6c4"/>
<polygon points="1219.0,868.4 1216.1,862.8 1221.8,863.9" fill="#bca68c"/>
<polygon points="1175.7,851.3 1180.3,848.2 1182.3,856.9" fill="#bca68c"/>
<polygon points="1135.5,904.6 1127.3,908.2 1129.4,901.1" fill="#e2d6c4"/>
<polygon points="1164.9,890.1 1170.2,889.8 1172.5,894.2 1166.3,895.4" fill="#68503e"/>
<polygon points="1087.6,870.4 1088.6,865.8 1093.0,867.5 1091.2,871.8" fill="#e2d6c4"/>
<polygon points="1223.4,936.3 1231.5,938.1 1229.9,944.7 1222.4,942.2" fill="#e2d6c4"/>
<polygon points="1091.4,927.9 1094.1,925.6 1099.6,928.2 1095.4,931.2" fill="#68503e"/>
<polygon points="1131.2,918.4 1126.8,914.8 1130.5,909.8" fill="#bca68c"/>
<polygon points="1167.6,894.0 1166.9,888.8 1170.7,890.0" fill="#bca68c"/>
<polygon points="1138.6,906.1 1135.5,904.4 1137.5,900.4 1140.9,903.7" fill="#68503e"/>
<polygon points="1208.5,934.2 1213.3,939.7 1207.5,943.7 1205.6,938.2" fill="#bca68c"/>
<polygon points="1104.3,887.4 1107.6,887.3 1106.4,890.5" fill="#e2d6c4"/>
<polygon points="1219.4,911.2 1215.2,914.4 1214.2,910.3" fill="#bca68c"/>
<polygon points="1157.8,900.7 1153.0,897.0 1159.1,894.5" fill="#e2d6c4"/>
<polygon points="1153.4,864.6 1147.9,861.1 1150.9,858.5" fill="#e2d6c4"/>
<polygon points="1160.6,918.5 1157.8,920.7 1156.4,917.2 1159.4,916.0" fill="#e2d6c4"/>
<polygon points="1093.0,848.9 1090.1,849.2 1088.5,845.2 1092.3,845.6" fill="#e2d6c4"/>
<polygon points="1130.3,851.3 1128.7,843.1 1134.3,843.9" fill="#e2d6c4"/>
<polygon points="1194.0,889.8 1187.4,886.2 1199.6,882.3" fill="#bca68c"/>
<polygon points="1098.1,857.4 1090.2,856.3 1094.5,852.7" fill="#e2d6c4"/>
<polygon points="1143.3,888.7 1147.4,888.9 1143.7,891.6" fill="#e2d6c4"/>
<polygon points="1220.8,899.7 1223.1,894.0 1226.0,897.1" fill="#bca68c"/>
<polygon points="1127.7,891.1 1125.7,884.5 1131.1,882.6 1134.5,888.1" fill="#e2d6c4"/>
<polygon points="1119.4,918.8 1113.9,918.5 1113.7,912.7 1118.4,911.8" fill="#e2d6c4"/>
<polygon points="1124.4,902.9 1125.6,899.3 1128.4,898.7 1130.4,902.1" fill="#e2d6c4"/>
<polygon points="1169.2,932.3 1167.7,937.3 1163.0,932.2 1167.8,929.7" fill="#68503e"/>
<polygon points="1090.6,894.5 1083.4,895.4 1086.9,891.5" fill="#e2d6c4"/>
<polygon points="1145.6,919.7 1154.1,922.3 1144.6,926.1" fill="#e2d6c4"/>
<polygon points="1221.5,941.0 1221.1,935.9 1223.3,934.2 1224.6,940.0" fill="#68503e"/>
<polygon points="1214.7,847.7 1211.3,853.6 1208.0,850.9 1206.5,845.6" fill="#e2d6c4"/>
<polygon points="1165.4,872.8 1171.9,875.5 1168.7,879.5 1164.0,877.2" fill="#68503e"/>
<polygon points="1152.4,868.5 1146.1,866.7 1151.4,863.8" fill="#bca68c"/>
<polygon points="1211.5,901.9 1210.4,905.7 1207.2,902.3" fill="#e2d6c4"/>
<polygon points="1159.4,862.0 1155.4,854.5 1159.0,850.9 1163.7,858.6" fill="#e2d6c4"/>
<polygon points="1140.1,867.3 1135.1,865.6 1137.0,860.2 1142.5,860.9" fill="#e2d6c4"/>
<polygon points="1158.0,919.3 1159.3,912.2 1165.3,911.4 1164.7,917.4" fill="#e2d6c4"/>
<polygon points="1094.4,851.3 1096.0,855.2 1092.0,853.8" fill="#bca68c"/>
<polygon points="1116.1,847.9 1112.9,852.2 1109.6,846.5" fill="#bca68c"/>
<polygon points="1211.9,843.9 1206.6,849.7 1203.0,845.2 1208.0,839.6" fill="#bca68c"/>
<polygon points="1186.6,896.3 1189.1,894.2 1192.7,896.7 1188.9,900.1" fill="#e2d6c4"/>
<polygon points="1207.6,869.5 1214.3,875.9 1209.0,879.8 1204.4,877.3" fill="#e2d6c4"/>
<polygon points="1211.2,918.8 1205.7,919.2 1208.2,914.9" fill="#68503e"/>
<polygon points="1091.0,853.4 1097.4,855.6 1097.8,862.3 1091.3,863.4" fill="#bca68c"/>
<polygon points="1216.4,922.8 1216.5,930.1 1209.0,925.5" fill="#68503e"/>
<polygon points="1208.5,847.3 1203.9,844.5 1206.9,839.3 1210.2,842.1" fill="#bca68c"/>
<polygon points="1100.5,933.2 1097.5,927.6 1101.9,926.7 1104.2,929.2" fill="#bca68c"/>
<polygon points="1112.8,853.2 1113.2,860.9 1107.3,856.7" fill="#e2d6c4"/>
<polygon points="1095.6,883.5 1098.1,889.3 1096.4,892.6 1088.8,890.9" fill="#bca68c"/>
<polygon points="1132.1,942.2 1123.6,944.1 1128.1,935.2" fill="#e2d6c4"/>
<polygon points="1144.5,923.3 1147.7,923.6 1148.1,927.0 1144.9,928.6" fill="#e2d6c4"/>
<polygon points="1170.6,927.1 1166.8,931.1 1164.3,927.6 1168.9,924.3" fill="#bca68c"/>
<polygon points="1177.9,879.1 1173.5,876.1 1180.2,874.7" fill="#e2d6c4"/>
<polygon points="1151.1,930.9 1156.4,933.1 1155.1,937.3 1148.3,934.5" fill="#bca68c"/>
<polygon points="1195.1,935.8 1191.5,933.3 1194.8,931.2" fill="#bca68c"/>
<polygon points="1226.8,851.2 1221.0,851.2 1222.5,845.6" fill="#e2d6c4"/>
<polygon points="1117.5,879.9 1114.0,880.7 1114.4,876.9" fill="#bca68c"/>
<polygon points="1149.8,846.6 1149.7,840.0 1155.2,841.7" fill="#bca68c"/>
<polygon points="1202.4,915.9 1206.3,917.8 1206.5,922.0 1202.4,920.7" fill="#e2d6c4"/>
<polygon points="1210.7,858.6 1212.8,861.8 1210.7,863.0 1208.0,861.0" fill="#bca68c"/>
<polygon points="1195.3,886.1 1192.1,879.8 1198.9,881.2 1199.6,887.0" fill="#e2d6c4"/>
<polygon points="1150.0,927.2 1153.4,922.9 1155.6,926.9" fill="#e2d6c4"/>
<polygon points="1187.5,879.8 1182.3,874.5 1188.6,873.6" fill="#bca68c"/>
<polygon points="1137.5,930.7 1137.6,934.9 1132.5,933.9 1133.2,930.6" fill="#e2d6c4"/>
<polygon points="1088.8,897.3 1087.1,904.3 1082.9,896.8" fill="#e2d6c4"/>
<polygon points="1143.7,862.8 1147.2,868.6 1140.2,868.5" fill="#68503e"/>
<polygon points="1111.2,921.9 1109.7,924.8 1106.5,924.3 1106.6,921.9" fill="#e2d6c4"/>
<polygon points="1182.0,861.9 1184.1,855.7 1188.4,858.9" fill="#bca68c"/>
<polygon points="1214.9,898.5 1211.8,898.2 1208.9,892.5 1215.0,892.8" fill="#e2d6c4"/>
<polygon points="1122.6,870.3 1127.5,867.9 1128.0,877.0 1121.9,877.0" fill="#68503e"/>
<polygon points="1100.6,837.2 1093.5,841.7 1093.1,836.1" fill="#bca68c"/>
<polygon points="1170.2,914.4 1173.9,912.7 1175.3,915.0 1172.3,916.0" fill="#68503e"/>
<polygon points="1213.5,904.2 1214.3,899.9 1217.1,901.7" fill="#68503e"/>
<polygon points="1196.2,905.5 1200.8,904.6 1202.2,909.4 1198.3,912.4" fill="#68503e"/>
<polygon points="1202.5,906.6 1209.1,910.4 1204.3,911.9" fill="#bca68c"/>
<polygon points="1122.3,919.5 1122.5,923.4 1118.6,923.2 1119.6,920.7" fill="#bca68c"/>
<polygon points="1082.0,863.6 1087.3,863.6 1084.3,868.2" fill="#68503e"/>
<polygon points="1188.1,845.2 1186.6,842.6 1187.1,839.4 1190.9,841.0" fill="#e2d6c4"/>
<polygon points="1101.4,903.4 1104.9,906.2 1100.5,908.9 1098.4,905.1" fill="#bca68c"/>
<polygon points="1221.7,873.7 1217.2,869.2 1222.7,866.0" fill="#e2d6c4"/>
<polygon points="1201.5,913.5 1199.7,919.3 1192.9,919.6 1194.5,914.6" fill="#e2d6c4"/>
<polygon points="1217.4,906.1 1208.3,902.7 1215.6,900.2" fill="#e2d6c4"/>
<polygon points="1096.2,859.8 1096.2,866.3 1091.3,865.3 1090.0,860.3" fill="#e2d6c4"/>
<polygon points="1208.6,895.2 1214.7,897.5 1209.7,901.1" fill="#bca68c"/>
<polygon points="1215.4,912.6 1218.6,916.3 1213.2,916.8" fill="#e2d6c4"/>
<polygon points="1175.2,919.7 1180.1,920.4 1177.9,923.7" fill="#e2d6c4"/>
<polygon points="1079.3,889.2 1086.9,885.2 1084.6,896.0" fill="#bca68c"/>
<polygon points="1083.6,840.2 1084.5,836.6 1086.5,837.4 1086.2,840.9" fill="#e2d6c4"/>
<polygon points="1130.1,914.2 1131.0,919.2 1126.7,917.5" fill="#68503e"/>
<polygon points="1191.0,926.3 1190.5,935.5 1184.5,926.6" fill="#bca68c"/>
<polygon points="1186.3,908.7 1185.4,901.6 1189.1,904.6" fill="#e2d6c4"/>
<polygon points="1189.2,853.7 1180.5,854.3 1183.8,849.2" fill="#bca68c"/>
<polygon points="1225.9,919.8 1220.9,911.7 1227.1,913.4" fill="#bca68c"/>
<polygon points="1228.6,848.4 1225.0,847.3 1226.2,843.5" fill="#e2d6c4"/>
<polygon points="1187.9,844.7 1191.6,838.9 1196.5,841.7" fill="#e2d6c4"/>
<polygon points="1171.1,914.8 1167.4,911.8 1172.1,910.5" fill="#bca68c"/>
<polygon points="1136.3,888.0 1140.0,891.6 1136.1,894.9 1132.3,891.4" fill="#68503e"/>
<polygon points="1194.1,929.1 1188.1,929.0 1193.0,924.4" fill="#68503e"/>
<polygon points="1150.4,849.0 1156.3,842.4 1158.6,849.7" fill="#e2d6c4"/>
<polygon points="1225.9,901.9 1223.4,893.8 1231.1,897.1" fill="#e2d6c4"/>
<polygon points="1138.7,936.7 1143.1,932.6 1144.9,935.9 1140.7,938.5" fill="#e2d6c4"/>
<polygon points="1212.9,936.3 1208.2,934.0 1213.5,930.9" fill="#e2d6c4"/>
<polygon points="1190.8,919.6 1187.6,918.9 1190.5,916.4" fill="#e2d6c4"/>
<polygon points="1099.9,902.8 1102.4,906.6 1100.5,910.6 1097.2,908.9" fill="#e2d6c4"/>
<polygon points="1114.2,888.4 1123.1,888.8 1118.0,894.3" fill="#e2d6c4"/>
<polygon points="1146.3,936.0 1147.0,940.1 1143.5,940.8 1141.9,938.3" fill="#bca68c"/>
<polygon points="1137.3,914.7 1133.1,913.4 1135.2,910.5" fill="#68503e"/>
<polygon points="1091.7,859.7 1084.0,859.8 1084.6,854.4 1091.6,856.3" fill="#e2d6c4"/>
<polygon points="1205.5,935.2 1203.4,941.0 1197.7,935.9 1200.8,931.9" fill="#e2d6c4"/>
<polygon points="1186.1,927.1 1182.7,921.8 1186.5,918.1 1191.4,922.1" fill="#68503e"/>
<polygon points="1222.8,938.8 1228.1,937.3 1226.1,943.6" fill="#68503e"/>
<polygon points="1169.9,905.6 1178.3,908.0 1174.7,912.4 1170.6,909.8" fill="#e2d6c4"/>
<polygon points="1166.9,862.2 1170.2,858.8 1172.0,865.1" fill="#bca68c"/>
<polygon points="1127.6,927.1 1128.3,920.8 1135.7,921.9 1136.5,928.0" fill="#bca68c"/>
<polygon points="1188.7,895.2 1191.3,892.8 1195.1,895.1 1192.1,896.8" fill="#bca68c"/>
<polygon points="1201.4,875.2 1193.9,876.0 1198.9,868.1" fill="#e2d6c4"/>
<polygon points="1198.9,919.3 1196.6,916.6 1197.7,911.4 1202.9,916.2" fill="#e2d6c4"/>
<polygon points="1221.3,941.3 1221.5,935.7 1225.6,935.8" fill="#e2d6c4"/>
<polygon points="1214.8,839.4 1222.7,833.7 1225.4,842.7" fill="#e2d6c4"/>
<polygon points="1198.0,871.8 1201.7,870.9 1200.5,874.1" fill="#68503e"/>
<polygon points="1137.8,856.0 1132.7,857.7 1132.5,849.9 1138.8,851.5" fill="#e2d6c4"/>
<polygon points="1147.7,884.5 1145.2,882.4 1150.5,879.5 1152.0,884.5" fill="#bca68c"/>
<polygon points="1126.5,918.1 1130.9,910.6 1133.3,917.1" fill="#e2d6c4"/>
<polygon points="1177.8,910.6 1174.2,915.7 1170.4,911.7 1174.0,908.3" fill="#e2d6c4"/>
<polygon points="1220.2,927.0 1224.1,926.0 1224.1,929.3 1221.6,930.3" fill="#bca68c"/>
<polygon points="1222.3,919.4 1215.4,924.7 1210.0,918.9 1218.9,913.2" fill="#bca68c"/>
<polygon points="1124.4,867.8 1131.5,865.3 1131.8,873.0" fill="#e2d6c4"/>
<polygon points="1109.8,935.6 1106.7,941.1 1102.3,940.6 1104.9,935.4" fill="#bca68c"/>
<polygon points="1182.5,937.1 1180.6,932.2 1185.0,933.5" fill="#e2d6c4"/>
<polygon points="1174.5,885.1 1182.4,884.8 1182.5,890.2 1173.2,890.3" fill="#68503e"/>
<polygon points="1098.8,887.4 1096.9,885.3 1100.0,881.4 1101.9,886.3" fill="#e2d6c4"/>
<polygon points="1113.8,853.1 1119.2,855.6 1115.1,858.8" fill="#e2d6c4"/>
<polygon points="1184.4,908.3 1186.4,904.5 1188.6,909.4" fill="#bca68c"/>
<polygon points="1090.6,922.1 1095.3,926.3 1085.2,927.1" fill="#e2d6c4"/>
<polygon points="1136.8,866.1 1141.2,873.1 1134.9,874.8 1133.3,869.6" fill="#68503e"/>
<polygon points="1098.7,859.4 1103.2,866.9 1097.5,869.0 1093.4,866.5" fill="#68503e"/>
<polygon points="1141.6,838.0 1133.8,843.9 1131.3,837.7 1137.4,832.1" fill="#e2d6c4"/>
<polygon points="1147.7,892.0 1154.9,890.7 1158.0,896.4 1150.7,897.8" fill="#bca68c"/>
<polygon points="1186.6,912.1 1186.1,915.6 1181.2,914.9 1182.3,912.4" fill="#68503e"/>
<polygon points="1145.7,840.1 1144.4,845.5 1138.9,842.0" fill="#bca68c"/>
<polygon points="1156.9,889.9 1149.8,881.1 1158.7,880.8" fill="#bca68c"/>
<polygon points="1113.4,929.5 1108.1,919.8 1118.3,922.9" fill="#bca68c"/>
<polygon points="1137.7,941.2 1138.1,935.8 1141.8,939.8" fill="#bca68c"/>
<polygon points="1230.3,915.6 1226.7,923.4 1223.5,919.1 1225.1,914.9" fill="#bca68c"/>
<polygon points="1191.1,909.3 1184.3,908.5 1186.3,899.6 1194.2,903.9" fill="#bca68c"/>
<polygon points="1092.5,925.8 1088.7,929.0 1084.6,922.4 1087.1,919.9" fill="#bca68c"/>
<polygon points="1142.7,899.8 1139.9,894.3 1149.6,895.8" fill="#e2d6c4"/>
<polygon points="1109.5,864.6 1112.1,868.1 1109.1,871.7 1105.7,867.2" fill="#bca68c"/>
<polygon points="1126.7,853.5 1124.4,857.1 1122.1,851.8" fill="#e2d6c4"/>
<polygon points="1133.7,886.4 1132.8,892.7 1123.3,892.0 1123.8,886.0" fill="#68503e"/>
<polygon points="1190.2,905.8 1185.2,904.9 1188.4,901.8" fill="#e2d6c4"/>
<polygon points="1124.5,874.1 1123.4,866.5 1130.2,867.5 1132.6,875.3" fill="#68503e"/>
<polygon points="1128.7,885.2 1129.4,888.0 1126.8,889.3 1125.2,886.0" fill="#bca68c"/>
<polygon points="1157.6,876.0 1152.2,875.8 1155.5,871.6" fill="#bca68c"/>
<polygon points="1212.2,869.5 1212.1,873.7 1207.9,874.8 1208.0,868.0" fill="#bca68c"/>
<polygon points="1111.3,917.8 1113.4,921.3 1109.4,923.1" fill="#e2d6c4"/>
<polygon points="1113.9,841.4 1115.0,838.7 1117.2,839.8 1116.9,843.0" fill="#e2d6c4"/>
<polygon points="1106.4,882.1 1109.6,882.3 1110.2,888.1 1105.3,886.5" fill="#bca68c"/>
<polygon points="1160.9,848.8 1164.6,847.7 1165.3,851.8" fill="#68503e"/>
<polygon points="1215.6,871.6 1217.6,865.2 1221.6,871.9" fill="#68503e"/>
<polygon points="1117.2,840.3 1128.8,839.6 1122.1,849.4" fill="#e2d6c4"/>
<polygon points="1219.7,873.4 1218.8,880.4 1212.6,876.8" fill="#bca68c"/>
<polygon points="1132.7,878.6 1128.9,879.5 1127.3,876.5 1130.5,874.7" fill="#bca68c"/>
<polygon points="1092.0,909.7 1087.8,908.1 1086.8,900.9 1093.6,902.6" fill="#e2d6c4"/>
<polygon points="1149.4,884.7 1157.1,885.0 1158.2,889.6 1151.9,892.7" fill="#e2d6c4"/>
<polygon points="1172.2,874.8 1178.5,870.2 1180.7,875.0" fill="#68503e"/>
<polygon points="1087.2,845.6 1095.4,849.9 1090.7,855.1 1085.8,852.1" fill="#e2d6c4"/>
<polygon points="1218.0,911.2 1217.7,907.0 1222.0,908.7" fill="#e2d6c4"/>
<polygon points="1115.3,936.1 1112.7,932.9 1116.7,931.0" fill="#bca68c"/>
<polygon points="1169.5,860.6 1177.2,862.4 1172.5,866.7" fill="#68503e"/>
<polygon points="1186.1,875.8 1189.9,878.2 1186.4,883.5 1182.0,878.8" fill="#e2d6c4"/>
<polygon points="1228.5,897.4 1226.3,898.7 1225.9,894.2 1229.1,894.8" fill="#e2d6c4"/>
<polygon points="1134.9,880.8 1128.3,876.3 1136.2,871.0" fill="#bca68c"/>
<polygon points="1089.9,905.8 1088.4,912.0 1083.9,906.3" fill="#bca68c"/>
</g>
<polygon points="1027,938 1027,880 1029,861 1049,852 1080,841 1085,938" fill="#3a2a20" opacity="0.18"/>
<!-- tarp -->
<polygon points="945,938 962,924 992,919 1013,917 1030,927 1036,938" fill="#e0d5b6"/>
<polygon points="945,938 962,924 992,919 975,938" fill="#b9a23f"/>
<!-- downpipe -->
<polyline points="1166,687 1080,765 1078,840" stroke="#adadab" stroke-width="3" fill="none" stroke-linejoin="round"/>
</g>
<!-- watermarks -->
<g fill="#ffffff" opacity="0.15" font-size="10.5">
<text x="792" y="688" transform="rotate(8 792 688)">©2019 Google</text>
<text x="647" y="798" transform="rotate(6 647 798)">Google</text>
<text x="843" y="840" transform="rotate(4 843 840)">©2019 Google</text>
</g>
<!-- info box -->
<rect x="645" y="599" width="153" height="56" fill="#252220"/>
<line x1="769.5" y1="599" x2="769.5" y2="655" stroke="#5a5855" stroke-width="1"/>
<text x="653" y="616" font-size="12" font-weight="bold" fill="#f2f2f2">2 Geere</text>
<text x="653" y="631.5" font-size="10.8" fill="#d0d0d0">Berg, Kanton Thurgau</text>
<text x="653" y="647" font-size="10.9" fill="#a4c2f0">In Google Maps ansehen</text>
<path d="M783.5,637 C781.5,633 777.5,629.5 777.5,625.5 A6,6 0 1 1 789.5,625.5 C789.5,629.5 785.5,633 783.5,637 Z" fill="#a8a8a8"/>
<circle cx="783.5" cy="625.3" r="2.2" fill="#252220"/>
</svg>

</div>
<div id="sb"></div><div id="sbup"></div><div id="thumb"></div>
</body></html>
